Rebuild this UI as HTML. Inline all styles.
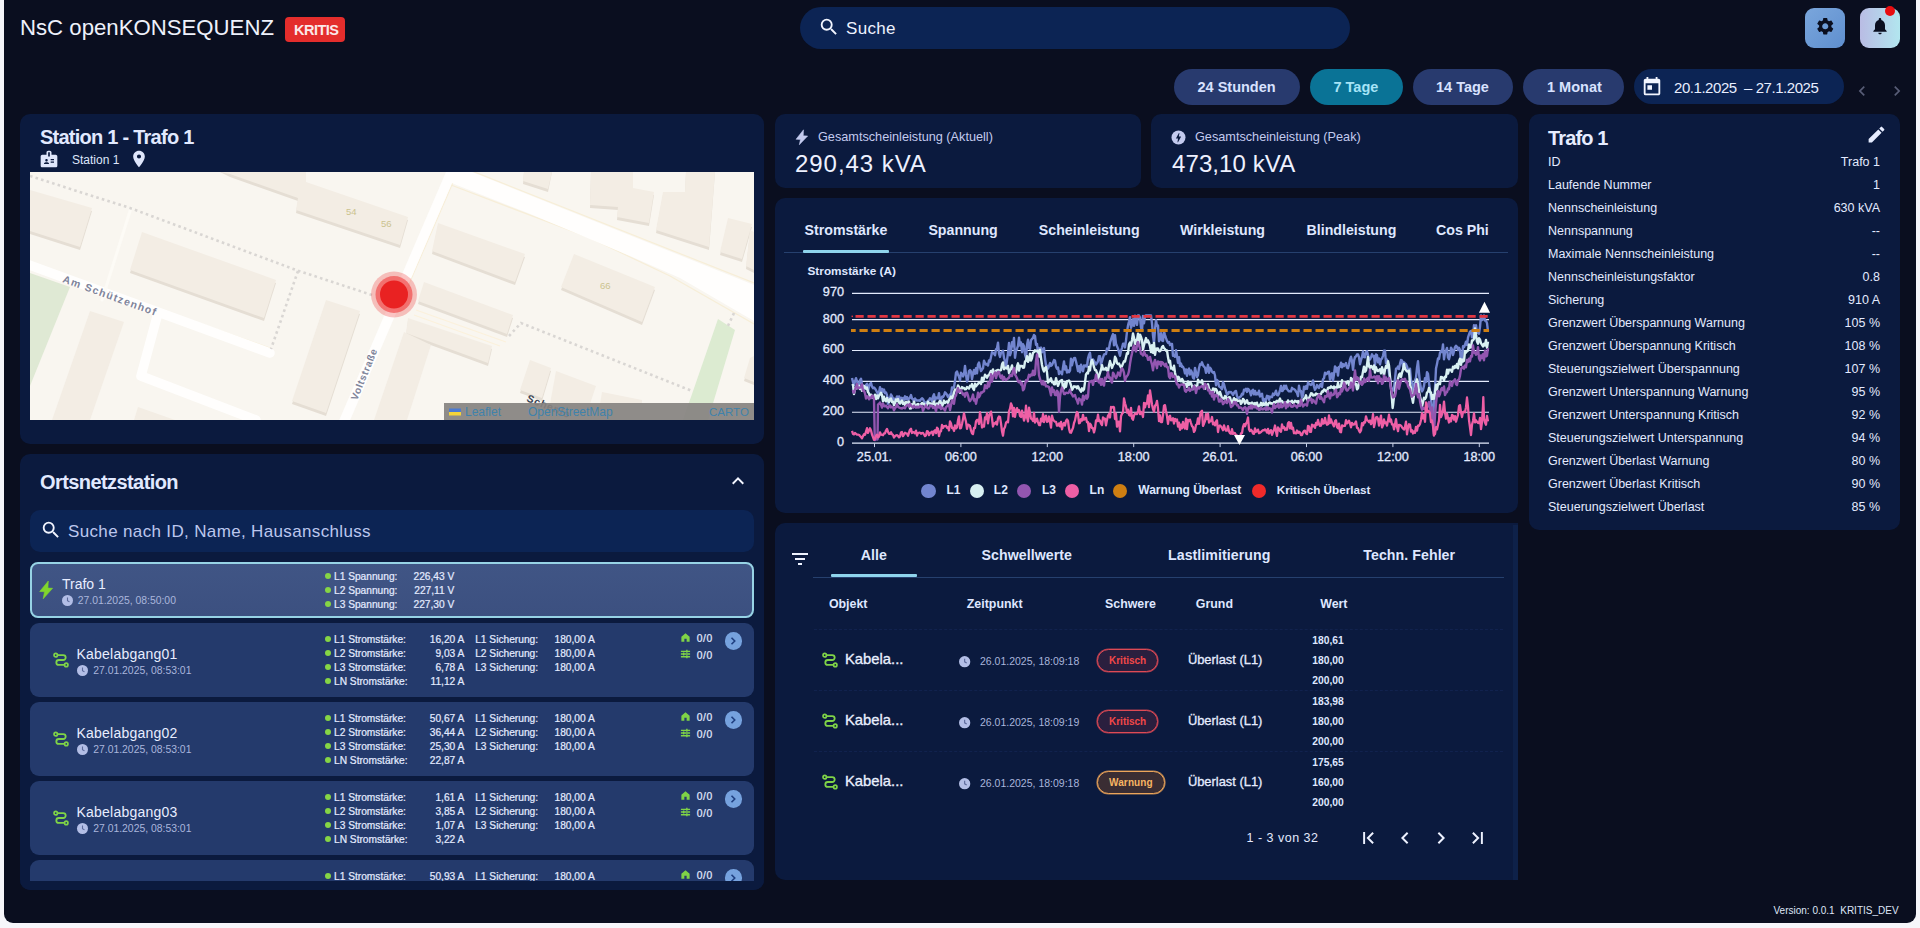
<!DOCTYPE html>
<html lang="de">
<head>
<meta charset="utf-8">
<title>NsC openKONSEQUENZ</title>
<style>
*{box-sizing:border-box;margin:0;padding:0}
html,body{width:1920px;height:928px;overflow:hidden;background:#f6f6fa;font-family:"Liberation Sans",sans-serif;color:#e3eaff}
#app{position:absolute;left:4px;top:0;width:1912px;height:923px;background:#0a0e1f;border-radius:0 0 9px 9px;overflow:hidden}
.abs,.t{position:absolute;white-space:pre;line-height:1}
.panel{position:absolute;background:#0b1a3e;border-radius:10px}
.b{font-weight:700}
svg{position:absolute;overflow:visible}
</style>
</head>
<body>
<div id="app">
<!-- HEADER -->
<div class="t" style="left:16px;top:16.5px;font-size:22.2px;color:#eef1fb">NsC openKONSEQUENZ</div>
<div class="abs" style="left:281px;top:17px;width:60px;height:25px;background:#e42d2c;border-radius:4px"></div>
<div class="t b" style="left:290px;top:22.5px;font-size:14.5px;letter-spacing:-0.5px;color:#fbe9ea">KRITIS</div>

<div class="abs" style="left:796px;top:7px;width:550px;height:42px;border-radius:21px;background:#0c2454"></div>
<svg style="left:814px;top:16px" width="22" height="22" viewBox="0 0 24 24"><path fill="#f2f5ff" d="M15.5 14h-.79l-.28-.27A6.471 6.471 0 0 0 16 9.500 6.500 6.500 0 1 0 9.500 16c1.610 0 3.090-.590 4.230-1.570l.27.280v.790l5 4.990L20.490 19l-4.990-5zm-6 0C7.010 14 5 11.990 5 9.500S7.010 5 9.500 5 14 7.010 14 9.500 11.990 14 9.500 14z"/></svg>
<div class="t" style="left:842px;top:19.5px;font-size:17px;letter-spacing:0.3px;color:#eef2ff">Suche</div>

<div class="abs" style="left:1801px;top:8px;width:40px;height:40px;border-radius:9px;background:linear-gradient(135deg,#7aa6dc,#5f8fcf)"></div>
<svg style="left:1810.5px;top:16.2px" width="20.5" height="20.5" viewBox="0 0 24 24"><path fill="#0a0e1f" d="M19.140 12.940c.040-.300.060-.610.060-.940 0-.320-.020-.640-.070-.940l2.030-1.580a.490.490 0 0 0 .120-.610l-1.920-3.320a.488.488 0 0 0-.590-.220l-2.390.960c-.500-.380-1.030-.700-1.620-.940l-.360-2.540a.484.484 0 0 0-.480-.410h-3.840c-.240 0-.430.170-.470.410l-.360 2.540c-.590.240-1.130.570-1.620.940l-2.390-.960c-.220-.080-.470 0-.590.220L2.740 8.870c-.120.210-.080.470.120.610l2.030 1.580c-.050.300-.090.630-.090.940s.020.640.070.940l-2.030 1.580a.490.490 0 0 0-.120.610l1.920 3.320c.120.220.370.290.590.220l2.390-.960c.500.380 1.030.700 1.620.940l.360 2.540c.050.240.240.410.480.410h3.840c.240 0 .440-.170.470-.410l.360-2.540c.590-.240 1.130-.560 1.620-.940l2.390.960c.220.080.470 0 .590-.220l1.920-3.320c.120-.220.070-.470-.120-.610l-2.010-1.580zM12 15.600c-1.980 0-3.600-1.620-3.600-3.600s1.620-3.600 3.600-3.600 3.600 1.620 3.600 3.600-1.620 3.600-3.600 3.600z"/></svg>
<div class="abs" style="left:1856px;top:8px;width:40px;height:40px;border-radius:9px;background:linear-gradient(90deg,#b9bce4,#b2e6ef)"></div>
<svg style="left:1866px;top:16.3px" width="20" height="20" viewBox="0 0 24 24"><path fill="#0a0e1f" d="M12 22c1.100 0 2-.900 2-2h-4c0 1.100.890 2 2 2zm6-6v-5c0-3.070-1.640-5.640-4.500-6.320V4c0-.830-.670-1.500-1.500-1.500s-1.500.670-1.500 1.500v.680C7.630 5.360 6 7.920 6 11v5l-2 2v1h16v-1l-2-2z"/></svg>
<div class="abs" style="left:1881px;top:6px;width:10px;height:10px;border-radius:5px;background:#e80d10"></div>

<!-- time range buttons -->
<div class="abs" style="left:1170px;top:69px;width:126px;height:36px;border-radius:18px;background:#283a6e"></div>
<div class="t b" style="left:1193.5px;top:79.5px;font-size:14.5px;color:#d8e2ff">24 Stunden</div>
<div class="abs" style="left:1306px;top:69px;width:93px;height:36px;border-radius:18px;background:#0a7396"></div>
<div class="t b" style="left:1329.5px;top:79.5px;font-size:14.5px;color:#a6e4f7">7 Tage</div>
<div class="abs" style="left:1409px;top:69px;width:100px;height:36px;border-radius:18px;background:#283a6e"></div>
<div class="t b" style="left:1432px;top:79.5px;font-size:14.5px;color:#d8e2ff">14 Tage</div>
<div class="abs" style="left:1519px;top:69px;width:101px;height:36px;border-radius:18px;background:#283a6e"></div>
<div class="t b" style="left:1543px;top:79.5px;font-size:14.5px;color:#d8e2ff">1 Monat</div>
<div class="abs" style="left:1630px;top:69px;width:210px;height:35px;border-radius:18px;background:#0c2454"></div>
<svg style="left:1637px;top:76px" width="22" height="22" viewBox="0 0 24 24"><path fill="#f2f5ff" d="M19 3h-1V1h-2v2H8V1H6v2H5c-1.110 0-1.990.900-1.990 2L3 19a2 2 0 0 0 2 2h14c1.100 0 2-.900 2-2V5c0-1.100-.900-2-2-2zm0 16H5V8h14v11zM7 10h5v5H7z"/></svg>
<div class="t" style="left:1670px;top:80px;font-size:15px;letter-spacing:-0.45px;color:#e8eeff">20.1.2025  – 27.1.2025</div>
<svg style="left:1848px;top:81px" width="20" height="20" viewBox="0 0 24 24"><path fill="#585d76" d="M15.410 7.410 14 6l-6 6 6 6 1.410-1.410L10.830 12z"/></svg>
<svg style="left:1883px;top:81px" width="20" height="20" viewBox="0 0 24 24"><path fill="#585d76" d="M10 6 8.590 7.410 13.170 12l-4.580 4.590L10 18l6-6z"/></svg>
<!-- STATION PANEL -->
<div class="panel" style="left:16px;top:114px;width:744px;height:330px"></div>
<div class="t b" style="left:36px;top:126.6px;font-size:20px;letter-spacing:-0.75px;color:#e1e9ff">Station 1 - Trafo 1</div>
<svg style="left:35px;top:149px" width="20" height="20" viewBox="0 0 24 24"><path fill="#dfe6fb" d="M20 7h-5V4c0-1.100-.900-2-2-2h-2c-1.100 0-2 .900-2 2v3H4c-1.100 0-2 .900-2 2v11c0 1.100.900 2 2 2h16c1.100 0 2-.900 2-2V9c0-1.100-.900-2-2-2zM9 12c.830 0 1.500.670 1.500 1.500S9.830 15 9 15s-1.500-.670-1.500-1.500S8.170 12 9 12zm3 6H6v-.750c0-1 2-1.500 3-1.500s3 .500 3 1.500V18zm1-9h-2V4h2v5zm5 7.500h-4V15h4v1.500zm0-3h-4V12h4v1.500z"/></svg>
<div class="t" style="left:68px;top:153.5px;font-size:12px;color:#dfe6fb">Station 1</div>
<svg style="left:125px;top:148.500px" width="20" height="20" viewBox="0 0 24 24"><path fill="#dfe6fb" d="M12 2C8.130 2 5 5.130 5 9c0 5.250 7 13 7 13s7-7.750 7-13c0-3.870-3.130-7-7-7zm0 9.500a2.500 2.500 0 0 1 0-5 2.500 2.500 0 0 1 0 5z"/></svg>
<!-- MAP -->
<div class="abs" style="left:26px;top:172px;width:724px;height:248px;background:#f8f5ef;overflow:hidden">
<svg width="724" height="248" viewBox="0 0 724 248" style="left:0;top:0">
<rect width="724" height="248" fill="#f9f6f0"/>
<!-- green -->
<polygon points="0,101 40,115 0,214" fill="#dfe9d4"/>
<polygon points="688,147 705,158 678,248 653,248" fill="#dcebd1"/>
<!-- block outlines (pedestrian) -->
<g fill="none" stroke="#f7eed8" stroke-width="1.200">
<polyline points="421,13 560,66 640,104 724,152"/><polyline points="442,-1 724,111"/>
<polyline points="0,92 240,176"/>
<polyline points="424,8 372,128"/>
</g>
<!-- roads -->
<g stroke="#fffefd" fill="none" stroke-linecap="round" stroke-linejoin="round">
<polygon points="437,-2 724,113 724,149 650,106 600,84 498,41 414,8 418,-2" fill="#fffefd" stroke="none"/>
<polyline points="-6,91 240,181" stroke-width="9.500"/>
<polyline points="128,141 111,204 226,248" stroke-width="9.500"/>
<line x1="424" y1="-6" x2="313" y2="252" stroke-width="10" stroke-linecap="butt"/>
<line x1="101" y1="36" x2="72" y2="128" stroke-width="3" stroke="#fdfbf6"/>
</g>
<!-- dotted footpaths -->
<g fill="none" stroke="#d9d6d3" stroke-width="2.600" stroke-dasharray="2.600 3.200">
<polyline points="0,4 100,36 266,98 342,123"/>
<polyline points="268,99 241,177"/>
<polyline points="479,164 491,151 662,219"/>
<polyline points="704,141 697,156"/>
</g>
<!-- buildings: shadow then top -->
<g fill="#e5ded4">
<polygon points="0,21 62,39 50,78 0,62"/>
<polygon points="190,0 276,0 276,13 378,48 370,76 266,41 268,29 200,5"/>
<polygon points="112,63 246,111 234,149 100,101"/>
<polygon points="296,131 330,142 296,244 262,232"/>
<polygon points="408,54 495,85 485,113 402,82"/>
<polygon points="394,113 483,146 477,165 388,132"/>
<polygon points="378,149 462,177 458,194 376,164"/>
<polygon points="544,85 625,118 612,153 531,118"/>
<polygon points="494,0 522,0 518,20 493,12"/>
<polygon points="561,0 603,0 603,19 624,23 619,54 587,48 588,38 560,36"/>
<polygon points="656,0 685,0 679,78 626,61 633,23 655,23"/>
<polygon points="698,49 722,55 712,90 690,83"/>
<polygon points="720,61 724,63 724,101 716,97"/>
<polygon points="500,191 521,199 512,229 490,221"/>
<polygon points="714,209 724,213 724,187 720,189"/>
</g>
<g fill="#f3ede4">
<polygon points="0,18 62,36 50,75 0,59"/>
<polygon points="190,0 276,0 276,10 378,45 370,73 266,38 268,26 200,2"/>
<polygon points="112,60 246,108 234,146 100,98"/>
<polygon points="60,139 94,150 60,248 22,248"/>
<polygon points="108,235 145,248 104,248"/>
<polygon points="296,128 330,139 296,241 262,229"/>
<polygon points="374,160 401,173 377,248 344,248"/>
<polygon points="408,51 495,82 485,110 402,79"/>
<polygon points="394,110 483,143 477,162 388,129"/>
<polygon points="378,146 462,174 458,191 376,161"/>
<polygon points="544,82 625,115 612,150 531,115"/>
<polygon points="494,0 522,0 518,17 493,9"/>
<polygon points="561,0 603,0 603,16 624,20 619,51 587,45 588,35 560,33"/>
<polygon points="656,0 685,0 679,75 626,58 633,20 655,20"/>
<polygon points="698,46 722,52 712,87 690,80"/>
<polygon points="720,58 724,60 724,98 716,94"/>
<polygon points="500,188 521,196 512,226 490,218"/>
<polygon points="526,199 566,214 560,232 520,232"/>
<polygon points="572,220 612,228 612,232 570,232"/>
<polygon points="720,186 724,184 724,210 714,206"/>
</g>
<!-- steps -->
<g stroke="#fbf1dc" stroke-width="1.200"><line x1="386" y1="138" x2="476" y2="170"/><line x1="384" y1="143" x2="470" y2="174"/></g>
<!-- labels -->
<g font-family="Liberation Sans" font-weight="700" fill="#80849a">
<text x="0" y="0" font-size="10.500" letter-spacing="1.200" transform="translate(32,110) rotate(20)">Am Schützenhof</text>
<text x="0" y="0" font-size="10" letter-spacing="0.700" transform="translate(327,229) rotate(-68)">Voltstraße</text>
<text x="0" y="0" font-size="10.500" letter-spacing="0.800" fill="#3b4454" transform="translate(496,229) rotate(22)">Schenlo</text>
</g>
<g font-family="Liberation Sans" font-size="9.500" fill="#cbc38f">
<text x="316" y="43">54</text><text x="351" y="55">56</text><text x="570" y="117">66</text>
</g>
<!-- marker -->
<circle cx="364" cy="122.500" r="23" fill="#ee3030" fill-opacity="0.280"/>
<circle cx="364" cy="122.500" r="18.500" fill="#ee3030" fill-opacity="0.550"/>
<circle cx="364" cy="122.500" r="14" fill="#e92222"/>
<!-- attribution -->
<rect x="414" y="231" width="310" height="17" fill="#858280" fill-opacity="0.920"/>
<rect x="419" y="236.500" width="12" height="3.500" fill="#4c7ad2"/><rect x="419" y="240" width="12" height="3.500" fill="#f4d43a"/>
<g font-family="Liberation Sans" font-size="12" fill="#3f82ab"><text x="435" y="243.500">Leaflet</text><text x="498" y="243.500">OpenStreetMap</text><text x="679" y="243.500" font-size="11.500">CARTO</text></g>
</svg>
</div>
<!-- ORTSNETZSTATION PANEL -->
<div class="panel" style="left:16px;top:454px;width:744px;height:436px;overflow:hidden">
<div class="t b" style="left:20.0px;top:18.4px;font-size:20px;color:#e1e9ff;letter-spacing:-0.58px">Ortsnetzstation</div>
<svg style="left:706px;top:15px" width="24" height="24" viewBox="0 0 24 24"><path fill="#f2f5ff" d="M7.410 15.410 12 10.830l4.590 4.580L18 14l-6-6-6 6z"/></svg>
<div class="abs" style="left:10px;top:56px;width:724px;height:42px;border-radius:10px;background:#0c2454"></div>
<svg style="left:20px;top:65px" width="22" height="22" viewBox="0 0 24 24"><path fill="#f2f5ff" d="M15.500 14h-.790l-.280-.270A6.471 6.471 0 0 0 16 9.500 6.500 6.500 0 1 0 9.500 16c1.610 0 3.090-.590 4.230-1.570l.270.280v.790l5 4.990L20.490 19l-4.990-5zm-6 0C7.010 14 5 11.990 5 9.500S7.010 5 9.500 5 14 7.010 14 9.500 11.990 14 9.500 14z"/></svg>
<div class="t" style="left:48.0px;top:68.6px;font-size:17px;color:#bcc7ee;letter-spacing:0.35px">Suche nach ID, Name, Hausanschluss</div>
<div class="abs" style="left:10px;top:108px;width:724px;height:56px;border-radius:8px;border:2px solid #97d3e5;background:linear-gradient(180deg,#405585,#3c5080)"></div>
<svg style="left:0;top:0" width="10" height="10" viewBox="0 0 10 10"><polygon transform="translate(-20,-454)" points="48.3,581 39.7,591.5 44.5,591.7 43.2,598.8 52.6,588.3 47.9,588.1" fill="#80d62c" stroke="#80d62c" stroke-width="0.6" stroke-linejoin="round"/></svg>
<div class="t" style="left:42.0px;top:122.7px;font-size:14px;color:#e8edff;">Trafo 1</div>
<svg style="left:41.5px;top:140.7px" width="11" height="11" viewBox="0 0 11 11"><circle cx="5.500" cy="5.500" r="5.500" fill="#b3bee6"/><path d="M5.500 2.600V5.700L7.500 6.900" fill="none" stroke="#5c6a9a" stroke-width="1.100"/></svg>
<div class="t" style="left:57.7px;top:142.3px;font-size:10.4px;color:#aab6dc;">27.01.2025, 08:50:00</div>
<div class="abs" style="left:304.8px;top:118.8px;width:6.400px;height:6.400px;border-radius:50%;background:#86d545"></div>
<div class="t" style="left:314.0px;top:117.8px;font-size:10.2px;color:#e3eaff;-webkit-text-stroke:0.22px #e3eaff;">L1 Spannung:</div>
<div class="t" style="right:309.7px;top:117.8px;font-size:10.2px;color:#e3eaff;-webkit-text-stroke:0.22px #e3eaff;">226,43 V</div>
<div class="abs" style="left:304.8px;top:132.8px;width:6.400px;height:6.400px;border-radius:50%;background:#86d545"></div>
<div class="t" style="left:314.0px;top:131.8px;font-size:10.2px;color:#e3eaff;-webkit-text-stroke:0.22px #e3eaff;">L2 Spannung:</div>
<div class="t" style="right:309.7px;top:131.8px;font-size:10.2px;color:#e3eaff;-webkit-text-stroke:0.22px #e3eaff;">227,11 V</div>
<div class="abs" style="left:304.8px;top:146.8px;width:6.400px;height:6.400px;border-radius:50%;background:#86d545"></div>
<div class="t" style="left:314.0px;top:145.8px;font-size:10.2px;color:#e3eaff;-webkit-text-stroke:0.22px #e3eaff;">L3 Spannung:</div>
<div class="t" style="right:309.7px;top:145.8px;font-size:10.2px;color:#e3eaff;-webkit-text-stroke:0.22px #e3eaff;">227,30 V</div>
<div class="abs" style="left:10px;top:169.2px;width:724px;height:73.600px;border-radius:9px;background:#243a6c"></div>
<svg style="left:32px;top:197.0px" width="18" height="18" viewBox="0 0 24 24"><g fill="none" stroke="#7fd447" stroke-width="2.400" stroke-linecap="round"><path d="M7.500 5.500H15a3.250 3.250 0 0 1 0 6.500H9a3.250 3.250 0 0 0 0 6.500h7.500"/></g><circle cx="5" cy="5.500" r="2.300" fill="none" stroke="#7fd447" stroke-width="2.200"/><circle cx="19" cy="18.500" r="2.300" fill="none" stroke="#7fd447" stroke-width="2.200"/></svg>
<div class="t" style="left:56.5px;top:192.5px;font-size:14px;color:#e8edff;letter-spacing:0.22px">Kabelabgang01</div>
<svg style="left:56.5px;top:211.0px" width="11" height="11" viewBox="0 0 11 11"><circle cx="5.500" cy="5.500" r="5.500" fill="#b3bee6"/><path d="M5.500 2.600V5.700L7.500 6.900" fill="none" stroke="#5c6a9a" stroke-width="1.100"/></svg>
<div class="t" style="left:73.2px;top:211.8px;font-size:10.4px;color:#aab6dc;">27.01.2025, 08:53:01</div>
<div class="abs" style="left:304.8px;top:182.0px;width:6.400px;height:6.400px;border-radius:50%;background:#86d545"></div>
<div class="t" style="left:314.0px;top:181.0px;font-size:10.2px;color:#e3eaff;-webkit-text-stroke:0.22px #e3eaff;">L1 Stromstärke:</div>
<div class="t" style="right:299.7px;top:181.0px;font-size:10.2px;color:#e3eaff;-webkit-text-stroke:0.22px #e3eaff;">16,20 A</div>
<div class="t" style="left:455.2px;top:181.0px;font-size:10.2px;color:#e3eaff;-webkit-text-stroke:0.22px #e3eaff;">L1 Sicherung:</div>
<div class="t" style="right:169.3px;top:181.0px;font-size:10.2px;color:#e3eaff;-webkit-text-stroke:0.22px #e3eaff;">180,00 A</div>
<div class="abs" style="left:304.8px;top:196.0px;width:6.400px;height:6.400px;border-radius:50%;background:#86d545"></div>
<div class="t" style="left:314.0px;top:195.0px;font-size:10.2px;color:#e3eaff;-webkit-text-stroke:0.22px #e3eaff;">L2 Stromstärke:</div>
<div class="t" style="right:299.7px;top:195.0px;font-size:10.2px;color:#e3eaff;-webkit-text-stroke:0.22px #e3eaff;">9,03 A</div>
<div class="t" style="left:455.2px;top:195.0px;font-size:10.2px;color:#e3eaff;-webkit-text-stroke:0.22px #e3eaff;">L2 Sicherung:</div>
<div class="t" style="right:169.3px;top:195.0px;font-size:10.2px;color:#e3eaff;-webkit-text-stroke:0.22px #e3eaff;">180,00 A</div>
<div class="abs" style="left:304.8px;top:210.0px;width:6.400px;height:6.400px;border-radius:50%;background:#86d545"></div>
<div class="t" style="left:314.0px;top:209.0px;font-size:10.2px;color:#e3eaff;-webkit-text-stroke:0.22px #e3eaff;">L3 Stromstärke:</div>
<div class="t" style="right:299.7px;top:209.0px;font-size:10.2px;color:#e3eaff;-webkit-text-stroke:0.22px #e3eaff;">6,78 A</div>
<div class="t" style="left:455.2px;top:209.0px;font-size:10.2px;color:#e3eaff;-webkit-text-stroke:0.22px #e3eaff;">L3 Sicherung:</div>
<div class="t" style="right:169.3px;top:209.0px;font-size:10.2px;color:#e3eaff;-webkit-text-stroke:0.22px #e3eaff;">180,00 A</div>
<div class="abs" style="left:304.8px;top:224.0px;width:6.400px;height:6.400px;border-radius:50%;background:#86d545"></div>
<div class="t" style="left:314.0px;top:223.0px;font-size:10.2px;color:#e3eaff;-webkit-text-stroke:0.22px #e3eaff;">LN Stromstärke:</div>
<div class="t" style="right:299.7px;top:223.0px;font-size:10.2px;color:#e3eaff;-webkit-text-stroke:0.22px #e3eaff;">11,12 A</div>
<svg style="left:660px;top:177.8px" width="11" height="11" viewBox="0 0 24 24"><path fill="#7fd447" d="M12 2.500 3 10.500V21.500H9.500V14.500H14.500V21.500H21V10.500z"/></svg>
<div class="t" style="left:676.8px;top:179.5px;font-size:10.3px;color:#e3eaff;letter-spacing:0.5px;-webkit-text-stroke:0.22px #e3eaff;">0/0</div>
<svg style="left:660px;top:194.6px" width="11" height="10" preserveAspectRatio="none" viewBox="0 0 24 24"><g stroke="#7fd447" stroke-width="3.200" fill="none"><path d="M2 5.500H22M2 12H22M2 18.500H22"/><path d="M15 2V9M8 8.500V15.500M15 15V22" stroke-width="3"/></g></svg>
<div class="t" style="left:676.8px;top:196.5px;font-size:10.3px;color:#e3eaff;letter-spacing:0.5px;-webkit-text-stroke:0.22px #e3eaff;">0/0</div>
<div class="abs" style="left:704.5px;top:178.2px;width:17.600px;height:17.600px;border-radius:50%;background:#76a2de"></div>
<svg style="left:707.3px;top:181.0px" width="12" height="12" viewBox="0 0 24 24"><path fill="none" stroke="#1f3f80" stroke-width="3.200" d="M9 5.500 15.500 12 9 18.500"/></svg>
<div class="abs" style="left:10px;top:248.2px;width:724px;height:73.600px;border-radius:9px;background:#243a6c"></div>
<svg style="left:32px;top:276.0px" width="18" height="18" viewBox="0 0 24 24"><g fill="none" stroke="#7fd447" stroke-width="2.400" stroke-linecap="round"><path d="M7.500 5.500H15a3.250 3.250 0 0 1 0 6.500H9a3.250 3.250 0 0 0 0 6.500h7.500"/></g><circle cx="5" cy="5.500" r="2.300" fill="none" stroke="#7fd447" stroke-width="2.200"/><circle cx="19" cy="18.500" r="2.300" fill="none" stroke="#7fd447" stroke-width="2.200"/></svg>
<div class="t" style="left:56.5px;top:271.5px;font-size:14px;color:#e8edff;letter-spacing:0.22px">Kabelabgang02</div>
<svg style="left:56.5px;top:290.0px" width="11" height="11" viewBox="0 0 11 11"><circle cx="5.500" cy="5.500" r="5.500" fill="#b3bee6"/><path d="M5.500 2.600V5.700L7.500 6.900" fill="none" stroke="#5c6a9a" stroke-width="1.100"/></svg>
<div class="t" style="left:73.2px;top:290.8px;font-size:10.4px;color:#aab6dc;">27.01.2025, 08:53:01</div>
<div class="abs" style="left:304.8px;top:261.0px;width:6.400px;height:6.400px;border-radius:50%;background:#86d545"></div>
<div class="t" style="left:314.0px;top:260.0px;font-size:10.2px;color:#e3eaff;-webkit-text-stroke:0.22px #e3eaff;">L1 Stromstärke:</div>
<div class="t" style="right:299.7px;top:260.0px;font-size:10.2px;color:#e3eaff;-webkit-text-stroke:0.22px #e3eaff;">50,67 A</div>
<div class="t" style="left:455.2px;top:260.0px;font-size:10.2px;color:#e3eaff;-webkit-text-stroke:0.22px #e3eaff;">L1 Sicherung:</div>
<div class="t" style="right:169.3px;top:260.0px;font-size:10.2px;color:#e3eaff;-webkit-text-stroke:0.22px #e3eaff;">180,00 A</div>
<div class="abs" style="left:304.8px;top:275.0px;width:6.400px;height:6.400px;border-radius:50%;background:#86d545"></div>
<div class="t" style="left:314.0px;top:274.0px;font-size:10.2px;color:#e3eaff;-webkit-text-stroke:0.22px #e3eaff;">L2 Stromstärke:</div>
<div class="t" style="right:299.7px;top:274.0px;font-size:10.2px;color:#e3eaff;-webkit-text-stroke:0.22px #e3eaff;">36,44 A</div>
<div class="t" style="left:455.2px;top:274.0px;font-size:10.2px;color:#e3eaff;-webkit-text-stroke:0.22px #e3eaff;">L2 Sicherung:</div>
<div class="t" style="right:169.3px;top:274.0px;font-size:10.2px;color:#e3eaff;-webkit-text-stroke:0.22px #e3eaff;">180,00 A</div>
<div class="abs" style="left:304.8px;top:289.0px;width:6.400px;height:6.400px;border-radius:50%;background:#86d545"></div>
<div class="t" style="left:314.0px;top:288.0px;font-size:10.2px;color:#e3eaff;-webkit-text-stroke:0.22px #e3eaff;">L3 Stromstärke:</div>
<div class="t" style="right:299.7px;top:288.0px;font-size:10.2px;color:#e3eaff;-webkit-text-stroke:0.22px #e3eaff;">25,30 A</div>
<div class="t" style="left:455.2px;top:288.0px;font-size:10.2px;color:#e3eaff;-webkit-text-stroke:0.22px #e3eaff;">L3 Sicherung:</div>
<div class="t" style="right:169.3px;top:288.0px;font-size:10.2px;color:#e3eaff;-webkit-text-stroke:0.22px #e3eaff;">180,00 A</div>
<div class="abs" style="left:304.8px;top:303.0px;width:6.400px;height:6.400px;border-radius:50%;background:#86d545"></div>
<div class="t" style="left:314.0px;top:302.0px;font-size:10.2px;color:#e3eaff;-webkit-text-stroke:0.22px #e3eaff;">LN Stromstärke:</div>
<div class="t" style="right:299.7px;top:302.0px;font-size:10.2px;color:#e3eaff;-webkit-text-stroke:0.22px #e3eaff;">22,87 A</div>
<svg style="left:660px;top:256.8px" width="11" height="11" viewBox="0 0 24 24"><path fill="#7fd447" d="M12 2.500 3 10.500V21.500H9.500V14.500H14.500V21.500H21V10.500z"/></svg>
<div class="t" style="left:676.8px;top:258.5px;font-size:10.3px;color:#e3eaff;letter-spacing:0.5px;-webkit-text-stroke:0.22px #e3eaff;">0/0</div>
<svg style="left:660px;top:273.6px" width="11" height="10" preserveAspectRatio="none" viewBox="0 0 24 24"><g stroke="#7fd447" stroke-width="3.200" fill="none"><path d="M2 5.500H22M2 12H22M2 18.500H22"/><path d="M15 2V9M8 8.500V15.500M15 15V22" stroke-width="3"/></g></svg>
<div class="t" style="left:676.8px;top:275.5px;font-size:10.3px;color:#e3eaff;letter-spacing:0.5px;-webkit-text-stroke:0.22px #e3eaff;">0/0</div>
<div class="abs" style="left:704.5px;top:257.2px;width:17.600px;height:17.600px;border-radius:50%;background:#76a2de"></div>
<svg style="left:707.3px;top:260.0px" width="12" height="12" viewBox="0 0 24 24"><path fill="none" stroke="#1f3f80" stroke-width="3.200" d="M9 5.500 15.500 12 9 18.500"/></svg>
<div class="abs" style="left:10px;top:327.2px;width:724px;height:73.600px;border-radius:9px;background:#243a6c"></div>
<svg style="left:32px;top:355.0px" width="18" height="18" viewBox="0 0 24 24"><g fill="none" stroke="#7fd447" stroke-width="2.400" stroke-linecap="round"><path d="M7.500 5.500H15a3.250 3.250 0 0 1 0 6.500H9a3.250 3.250 0 0 0 0 6.500h7.500"/></g><circle cx="5" cy="5.500" r="2.300" fill="none" stroke="#7fd447" stroke-width="2.200"/><circle cx="19" cy="18.500" r="2.300" fill="none" stroke="#7fd447" stroke-width="2.200"/></svg>
<div class="t" style="left:56.5px;top:350.5px;font-size:14px;color:#e8edff;letter-spacing:0.22px">Kabelabgang03</div>
<svg style="left:56.5px;top:369.0px" width="11" height="11" viewBox="0 0 11 11"><circle cx="5.500" cy="5.500" r="5.500" fill="#b3bee6"/><path d="M5.500 2.600V5.700L7.500 6.900" fill="none" stroke="#5c6a9a" stroke-width="1.100"/></svg>
<div class="t" style="left:73.2px;top:369.8px;font-size:10.4px;color:#aab6dc;">27.01.2025, 08:53:01</div>
<div class="abs" style="left:304.8px;top:340.0px;width:6.400px;height:6.400px;border-radius:50%;background:#86d545"></div>
<div class="t" style="left:314.0px;top:339.0px;font-size:10.2px;color:#e3eaff;-webkit-text-stroke:0.22px #e3eaff;">L1 Stromstärke:</div>
<div class="t" style="right:299.7px;top:339.0px;font-size:10.2px;color:#e3eaff;-webkit-text-stroke:0.22px #e3eaff;">1,61 A</div>
<div class="t" style="left:455.2px;top:339.0px;font-size:10.2px;color:#e3eaff;-webkit-text-stroke:0.22px #e3eaff;">L1 Sicherung:</div>
<div class="t" style="right:169.3px;top:339.0px;font-size:10.2px;color:#e3eaff;-webkit-text-stroke:0.22px #e3eaff;">180,00 A</div>
<div class="abs" style="left:304.8px;top:354.0px;width:6.400px;height:6.400px;border-radius:50%;background:#86d545"></div>
<div class="t" style="left:314.0px;top:353.0px;font-size:10.2px;color:#e3eaff;-webkit-text-stroke:0.22px #e3eaff;">L2 Stromstärke:</div>
<div class="t" style="right:299.7px;top:353.0px;font-size:10.2px;color:#e3eaff;-webkit-text-stroke:0.22px #e3eaff;">3,85 A</div>
<div class="t" style="left:455.2px;top:353.0px;font-size:10.2px;color:#e3eaff;-webkit-text-stroke:0.22px #e3eaff;">L2 Sicherung:</div>
<div class="t" style="right:169.3px;top:353.0px;font-size:10.2px;color:#e3eaff;-webkit-text-stroke:0.22px #e3eaff;">180,00 A</div>
<div class="abs" style="left:304.8px;top:368.0px;width:6.400px;height:6.400px;border-radius:50%;background:#86d545"></div>
<div class="t" style="left:314.0px;top:367.0px;font-size:10.2px;color:#e3eaff;-webkit-text-stroke:0.22px #e3eaff;">L3 Stromstärke:</div>
<div class="t" style="right:299.7px;top:367.0px;font-size:10.2px;color:#e3eaff;-webkit-text-stroke:0.22px #e3eaff;">1,07 A</div>
<div class="t" style="left:455.2px;top:367.0px;font-size:10.2px;color:#e3eaff;-webkit-text-stroke:0.22px #e3eaff;">L3 Sicherung:</div>
<div class="t" style="right:169.3px;top:367.0px;font-size:10.2px;color:#e3eaff;-webkit-text-stroke:0.22px #e3eaff;">180,00 A</div>
<div class="abs" style="left:304.8px;top:382.0px;width:6.400px;height:6.400px;border-radius:50%;background:#86d545"></div>
<div class="t" style="left:314.0px;top:381.0px;font-size:10.2px;color:#e3eaff;-webkit-text-stroke:0.22px #e3eaff;">LN Stromstärke:</div>
<div class="t" style="right:299.7px;top:381.0px;font-size:10.2px;color:#e3eaff;-webkit-text-stroke:0.22px #e3eaff;">3,22 A</div>
<svg style="left:660px;top:335.8px" width="11" height="11" viewBox="0 0 24 24"><path fill="#7fd447" d="M12 2.500 3 10.500V21.500H9.500V14.500H14.500V21.500H21V10.500z"/></svg>
<div class="t" style="left:676.8px;top:337.5px;font-size:10.3px;color:#e3eaff;letter-spacing:0.5px;-webkit-text-stroke:0.22px #e3eaff;">0/0</div>
<svg style="left:660px;top:352.6px" width="11" height="10" preserveAspectRatio="none" viewBox="0 0 24 24"><g stroke="#7fd447" stroke-width="3.200" fill="none"><path d="M2 5.500H22M2 12H22M2 18.500H22"/><path d="M15 2V9M8 8.500V15.500M15 15V22" stroke-width="3"/></g></svg>
<div class="t" style="left:676.8px;top:354.5px;font-size:10.3px;color:#e3eaff;letter-spacing:0.5px;-webkit-text-stroke:0.22px #e3eaff;">0/0</div>
<div class="abs" style="left:704.5px;top:336.2px;width:17.600px;height:17.600px;border-radius:50%;background:#76a2de"></div>
<svg style="left:707.3px;top:339.0px" width="12" height="12" viewBox="0 0 24 24"><path fill="none" stroke="#1f3f80" stroke-width="3.200" d="M9 5.500 15.500 12 9 18.500"/></svg>
<div class="abs" style="left:10px;top:406.2px;width:724px;height:73.600px;border-radius:9px;background:#243a6c"></div>
<svg style="left:32px;top:434.0px" width="18" height="18" viewBox="0 0 24 24"><g fill="none" stroke="#7fd447" stroke-width="2.400" stroke-linecap="round"><path d="M7.500 5.500H15a3.250 3.250 0 0 1 0 6.500H9a3.250 3.250 0 0 0 0 6.500h7.500"/></g><circle cx="5" cy="5.500" r="2.300" fill="none" stroke="#7fd447" stroke-width="2.200"/><circle cx="19" cy="18.500" r="2.300" fill="none" stroke="#7fd447" stroke-width="2.200"/></svg>
<div class="t" style="left:56.5px;top:429.5px;font-size:14px;color:#e8edff;letter-spacing:0.22px">Kabelabgang04</div>
<svg style="left:56.5px;top:448.0px" width="11" height="11" viewBox="0 0 11 11"><circle cx="5.500" cy="5.500" r="5.500" fill="#b3bee6"/><path d="M5.500 2.600V5.700L7.500 6.900" fill="none" stroke="#5c6a9a" stroke-width="1.100"/></svg>
<div class="t" style="left:73.2px;top:448.8px;font-size:10.4px;color:#aab6dc;">27.01.2025, 08:53:01</div>
<div class="abs" style="left:304.8px;top:419.0px;width:6.400px;height:6.400px;border-radius:50%;background:#86d545"></div>
<div class="t" style="left:314.0px;top:418.0px;font-size:10.2px;color:#e3eaff;-webkit-text-stroke:0.22px #e3eaff;">L1 Stromstärke:</div>
<div class="t" style="right:299.7px;top:418.0px;font-size:10.2px;color:#e3eaff;-webkit-text-stroke:0.22px #e3eaff;">50,93 A</div>
<div class="t" style="left:455.2px;top:418.0px;font-size:10.2px;color:#e3eaff;-webkit-text-stroke:0.22px #e3eaff;">L1 Sicherung:</div>
<div class="t" style="right:169.3px;top:418.0px;font-size:10.2px;color:#e3eaff;-webkit-text-stroke:0.22px #e3eaff;">180,00 A</div>
<div class="abs" style="left:304.8px;top:433.0px;width:6.400px;height:6.400px;border-radius:50%;background:#86d545"></div>
<div class="t" style="left:314.0px;top:432.0px;font-size:10.2px;color:#e3eaff;-webkit-text-stroke:0.22px #e3eaff;">L2 Stromstärke:</div>
<div class="t" style="right:299.7px;top:432.0px;font-size:10.2px;color:#e3eaff;-webkit-text-stroke:0.22px #e3eaff;">41,02 A</div>
<div class="t" style="left:455.2px;top:432.0px;font-size:10.2px;color:#e3eaff;-webkit-text-stroke:0.22px #e3eaff;">L2 Sicherung:</div>
<div class="t" style="right:169.3px;top:432.0px;font-size:10.2px;color:#e3eaff;-webkit-text-stroke:0.22px #e3eaff;">180,00 A</div>
<div class="abs" style="left:304.8px;top:447.0px;width:6.400px;height:6.400px;border-radius:50%;background:#86d545"></div>
<div class="t" style="left:314.0px;top:446.0px;font-size:10.2px;color:#e3eaff;-webkit-text-stroke:0.22px #e3eaff;">L3 Stromstärke:</div>
<div class="t" style="right:299.7px;top:446.0px;font-size:10.2px;color:#e3eaff;-webkit-text-stroke:0.22px #e3eaff;">33,10 A</div>
<div class="t" style="left:455.2px;top:446.0px;font-size:10.2px;color:#e3eaff;-webkit-text-stroke:0.22px #e3eaff;">L3 Sicherung:</div>
<div class="t" style="right:169.3px;top:446.0px;font-size:10.2px;color:#e3eaff;-webkit-text-stroke:0.22px #e3eaff;">180,00 A</div>
<div class="abs" style="left:304.8px;top:461.0px;width:6.400px;height:6.400px;border-radius:50%;background:#86d545"></div>
<div class="t" style="left:314.0px;top:460.0px;font-size:10.2px;color:#e3eaff;-webkit-text-stroke:0.22px #e3eaff;">LN Stromstärke:</div>
<div class="t" style="right:299.7px;top:460.0px;font-size:10.2px;color:#e3eaff;-webkit-text-stroke:0.22px #e3eaff;">20,11 A</div>
<svg style="left:660px;top:414.8px" width="11" height="11" viewBox="0 0 24 24"><path fill="#7fd447" d="M12 2.500 3 10.500V21.500H9.500V14.500H14.500V21.500H21V10.500z"/></svg>
<div class="t" style="left:676.8px;top:416.5px;font-size:10.3px;color:#e3eaff;letter-spacing:0.5px;-webkit-text-stroke:0.22px #e3eaff;">0/0</div>
<svg style="left:660px;top:431.6px" width="11" height="10" preserveAspectRatio="none" viewBox="0 0 24 24"><g stroke="#7fd447" stroke-width="3.200" fill="none"><path d="M2 5.500H22M2 12H22M2 18.500H22"/><path d="M15 2V9M8 8.500V15.500M15 15V22" stroke-width="3"/></g></svg>
<div class="t" style="left:676.8px;top:433.5px;font-size:10.3px;color:#e3eaff;letter-spacing:0.5px;-webkit-text-stroke:0.22px #e3eaff;">0/0</div>
<div class="abs" style="left:704.5px;top:415.2px;width:17.600px;height:17.600px;border-radius:50%;background:#76a2de"></div>
<svg style="left:707.3px;top:418.0px" width="12" height="12" viewBox="0 0 24 24"><path fill="none" stroke="#1f3f80" stroke-width="3.200" d="M9 5.500 15.500 12 9 18.500"/></svg>
<div class="abs" style="left:0;top:426.500px;width:744px;height:12px;background:#0b1a3e"></div>
</div>
<!-- KPI CARDS -->
<div class="panel" style="left:770.500px;top:114px;width:366.500px;height:73.500px"></div>
<div class="panel" style="left:1147px;top:114px;width:367px;height:73.500px"></div>
<svg style="left:0;top:0" width="10" height="10" viewBox="0 0 10 10"><polygon transform="translate(-4,0)" points="803.5,129.800 796,139.300 800.400,139.500 799.300,144.800 807.700,136 803.300,135.800" fill="#c3caee" stroke="#c3caee" stroke-width="0.500" stroke-linejoin="round"/></svg>
<div class="t" style="left:814.0px;top:130.8px;font-size:12.7px;color:#c3cbee;">Gesamtscheinleistung (Aktuell)</div>
<div class="t" style="left:791.0px;top:151.5px;font-size:24px;color:#eef1ff;letter-spacing:0.95px">290,43 kVA</div>
<svg style="left:1166.500px;top:129.500px" width="15" height="15" viewBox="0 0 15 15"><circle cx="7.500" cy="7.500" r="7" fill="#c3caee"/><path fill="#0b1a3e" d="M7 12.200h-.500l.500-3.600H5.200c-.450 0-.170-.380-.160-.400L7.900 3h.500l-.500 3.600h1.800c.200 0 .320.100.200.340z"/></svg>
<div class="t" style="left:1191.0px;top:130.8px;font-size:12.7px;color:#c3cbee;">Gesamtscheinleistung (Peak)</div>
<div class="t" style="left:1168.0px;top:151.5px;font-size:24px;color:#eef1ff;letter-spacing:0.1px">473,10 kVA</div>
<!-- CHART PANEL -->
<div class="panel" style="left:770.500px;top:198px;width:743.500px;height:315px"></div>
<div class="t b" style="left:800.5px;top:223.3px;font-size:14.2px;color:#dfe7ff;">Stromstärke</div>
<div class="t b" style="left:924.4px;top:223.3px;font-size:14.2px;color:#dfe7ff;">Spannung</div>
<div class="t b" style="left:1034.8px;top:223.3px;font-size:14.2px;color:#dfe7ff;">Scheinleistung</div>
<div class="t b" style="left:1176.0px;top:223.3px;font-size:14.2px;color:#dfe7ff;">Wirkleistung</div>
<div class="t b" style="left:1302.5px;top:223.3px;font-size:14.2px;color:#dfe7ff;">Blindleistung</div>
<div class="t b" style="left:1432.0px;top:223.3px;font-size:14.2px;color:#dfe7ff;">Cos Phi</div>
<div class="abs" style="left:780px;top:252px;width:724px;height:1px;background:#26406e"></div>
<div class="abs" style="left:799px;top:249.500px;width:86px;height:3px;background:#8fd4ec;border-radius:1px"></div>
<div class="t b" style="left:803.5px;top:266.1px;font-size:11.8px;color:#dfe7ff;">Stromstärke (A)</div>
<svg style="left:-4px;top:0" width="1920" height="928" viewBox="0 0 1920 928">
<line x1="852" x2="1489" y1="293.4" y2="293.4" stroke="#e4ebfd" stroke-width="1.1"/>
<line x1="852" x2="1489" y1="319.6" y2="319.6" stroke="#e4ebfd" stroke-width="1.1"/>
<line x1="852" x2="1489" y1="350.5" y2="350.5" stroke="#e4ebfd" stroke-width="1.1"/>
<line x1="852" x2="1489" y1="381.4" y2="381.4" stroke="#e4ebfd" stroke-width="1.1"/>
<line x1="852" x2="1489" y1="412.2" y2="412.2" stroke="#e4ebfd" stroke-width="1.1"/>
<line x1="852" x2="1489" y1="443.1" y2="443.1" stroke="#e4ebfd" stroke-width="1.1"/>
<line x1="874.5" x2="874.5" y1="443.1" y2="447.1" stroke="#c5cfe8" stroke-width="1"/>
<line x1="960.9" x2="960.9" y1="443.1" y2="447.1" stroke="#c5cfe8" stroke-width="1"/>
<line x1="1047.3" x2="1047.3" y1="443.1" y2="447.1" stroke="#c5cfe8" stroke-width="1"/>
<line x1="1133.7" x2="1133.7" y1="443.1" y2="447.1" stroke="#c5cfe8" stroke-width="1"/>
<line x1="1220.1" x2="1220.1" y1="443.1" y2="447.1" stroke="#c5cfe8" stroke-width="1"/>
<line x1="1306.5" x2="1306.5" y1="443.1" y2="447.1" stroke="#c5cfe8" stroke-width="1"/>
<line x1="1392.9" x2="1392.9" y1="443.1" y2="447.1" stroke="#c5cfe8" stroke-width="1"/>
<line x1="1479.3" x2="1479.3" y1="443.1" y2="447.1" stroke="#c5cfe8" stroke-width="1"/>
<path d="M852.0 378.0 L853.0 382.1 L854.0 385.1 L855.0 381.4 L856.0 378.2 L857.0 381.3 L858.0 383.9 L859.0 386.5 L860.0 380.3 L861.0 378.7 L862.0 384.4 L863.0 385.3 L864.0 388.8 L865.0 388.1 L866.0 384.9 L867.0 383.7 L868.0 392.1 L869.0 386.4 L870.0 384.0 L871.0 382.9 L872.0 386.7 L873.0 388.2 L874.0 387.6 L875.0 388.6 L876.0 390.2 L877.0 392.1 L878.0 394.0 L879.0 392.5 L880.0 387.1 L881.0 392.8 L882.0 389.0 L883.0 391.7 L884.0 389.5 L885.0 393.1 L886.0 392.4 L887.0 395.1 L888.0 403.8 L889.0 398.0 L890.0 399.1 L891.0 394.5 L892.0 396.2 L893.0 399.3 L894.0 398.6 L895.0 399.9 L896.0 399.3 L897.0 396.4 L898.0 399.2 L899.0 396.5 L900.0 402.1 L901.0 397.7 L902.0 399.3 L903.0 397.9 L904.0 399.8 L905.0 396.3 L906.0 399.2 L907.0 397.0 L908.0 399.8 L909.0 398.7 L910.0 397.4 L911.0 395.1 L912.0 398.6 L913.0 399.0 L914.0 402.2 L915.0 398.5 L916.0 400.0 L917.0 400.6 L918.0 400.4 L919.0 400.5 L920.0 400.7 L921.0 399.3 L922.0 398.2 L923.0 399.1 L924.0 401.2 L925.0 403.4 L926.0 402.4 L927.0 402.0 L928.0 400.8 L929.0 400.0 L930.0 398.2 L931.0 398.8 L932.0 401.2 L933.0 396.5 L934.0 394.3 L935.0 400.3 L936.0 397.4 L937.0 398.4 L938.0 398.3 L939.0 393.1 L940.0 400.7 L941.0 400.8 L942.0 396.7 L943.0 397.0 L944.0 395.4 L945.0 392.3 L946.0 393.4 L947.0 394.8 L948.0 396.9 L949.0 396.3 L950.0 394.4 L951.0 394.9 L952.0 387.4 L953.0 388.0 L954.0 387.3 L955.0 380.9 L956.0 372.7 L957.0 371.4 L958.0 374.8 L959.0 376.7 L960.0 380.4 L961.0 372.7 L962.0 374.0 L963.0 376.4 L964.0 374.1 L965.0 366.0 L966.0 374.5 L967.0 381.6 L968.0 378.8 L969.0 371.0 L970.0 370.0 L971.0 371.4 L972.0 379.1 L973.0 373.8 L974.0 370.1 L975.0 373.8 L976.0 368.2 L977.0 373.3 L978.0 364.5 L979.0 362.5 L980.0 366.9 L981.0 371.1 L982.0 369.6 L983.0 368.3 L984.0 360.6 L985.0 363.1 L986.0 364.5 L987.0 363.9 L988.0 365.5 L989.0 360.4 L990.0 361.5 L991.0 357.0 L992.0 352.2 L993.0 352.8 L994.0 353.7 L995.0 355.2 L996.0 349.3 L997.0 348.3 L998.0 342.6 L999.0 353.6 L1000.0 356.9 L1001.0 352.7 L1002.0 352.1 L1003.0 350.7 L1004.0 357.8 L1005.0 361.1 L1006.0 367.6 L1007.0 360.3 L1008.0 353.0 L1009.0 343.0 L1010.0 355.4 L1011.0 352.1 L1012.0 342.2 L1013.0 346.3 L1014.0 338.0 L1015.0 357.8 L1016.0 351.1 L1017.0 348.7 L1018.0 345.9 L1019.0 337.6 L1020.0 345.6 L1021.0 342.5 L1022.0 352.2 L1023.0 344.2 L1024.0 346.2 L1025.0 354.7 L1026.0 357.8 L1027.0 345.3 L1028.0 339.6 L1029.0 348.0 L1030.0 349.0 L1031.0 340.2 L1032.0 338.9 L1033.0 338.0 L1034.0 335.0 L1035.0 336.0 L1036.0 344.9 L1037.0 343.9 L1038.0 353.2 L1039.0 347.9 L1040.0 348.7 L1041.0 347.6 L1042.0 352.4 L1043.0 349.6 L1044.0 348.1 L1045.0 358.8 L1046.0 365.3 L1047.0 365.6 L1048.0 368.6 L1049.0 366.2 L1050.0 363.0 L1051.0 365.9 L1052.0 365.1 L1053.0 362.6 L1054.0 360.1 L1055.0 360.6 L1056.0 366.4 L1057.0 368.7 L1058.0 367.4 L1059.0 374.1 L1060.0 371.6 L1061.0 372.1 L1062.0 374.3 L1063.0 367.5 L1064.0 361.5 L1065.0 369.6 L1066.0 366.3 L1067.0 372.5 L1068.0 370.4 L1069.0 372.2 L1070.0 370.6 L1071.0 358.7 L1072.0 365.2 L1073.0 360.7 L1074.0 358.2 L1075.0 357.9 L1076.0 361.6 L1077.0 365.9 L1078.0 371.1 L1079.0 366.2 L1080.0 372.2 L1081.0 364.6 L1082.0 369.1 L1083.0 371.2 L1084.0 365.5 L1085.0 366.4 L1086.0 365.2 L1087.0 366.5 L1088.0 358.4 L1089.0 354.8 L1090.0 352.8 L1091.0 361.2 L1092.0 362.7 L1093.0 359.4 L1094.0 361.2 L1095.0 362.5 L1096.0 364.4 L1097.0 363.1 L1098.0 361.1 L1099.0 356.1 L1100.0 356.2 L1101.0 364.5 L1102.0 361.2 L1103.0 357.6 L1104.0 354.6 L1105.0 354.1 L1106.0 354.1 L1107.0 348.5 L1108.0 349.4 L1109.0 348.5 L1110.0 342.6 L1111.0 339.6 L1112.0 336.5 L1113.0 334.1 L1114.0 345.3 L1115.0 335.1 L1116.0 343.8 L1117.0 346.2 L1118.0 348.6 L1119.0 352.1 L1120.0 355.8 L1121.0 351.0 L1122.0 347.8 L1123.0 343.7 L1124.0 343.7 L1125.0 347.4 L1126.0 340.6 L1127.0 331.6 L1128.0 325.6 L1129.0 321.6 L1130.0 317.1 L1131.0 327.8 L1132.0 324.9 L1133.0 319.3 L1134.0 325.9 L1135.0 315.7 L1136.0 321.4 L1137.0 324.8 L1138.0 315.5 L1139.0 315.5 L1140.0 317.6 L1141.0 327.6 L1142.0 330.4 L1143.0 315.9 L1144.0 323.4 L1145.0 315.8 L1146.0 315.5 L1147.0 315.5 L1148.0 315.5 L1149.0 315.5 L1150.0 315.5 L1151.0 315.5 L1152.0 323.3 L1153.0 335.6 L1154.0 343.0 L1155.0 329.6 L1156.0 320.2 L1157.0 325.8 L1158.0 325.5 L1159.0 341.2 L1160.0 339.1 L1161.0 333.1 L1162.0 340.4 L1163.0 341.0 L1164.0 331.5 L1165.0 335.1 L1166.0 338.2 L1167.0 340.9 L1168.0 342.8 L1169.0 341.9 L1170.0 345.1 L1171.0 344.0 L1172.0 343.9 L1173.0 355.8 L1174.0 355.2 L1175.0 356.8 L1176.0 350.3 L1177.0 356.0 L1178.0 362.7 L1179.0 357.2 L1180.0 366.0 L1181.0 363.5 L1182.0 366.9 L1183.0 366.8 L1184.0 368.9 L1185.0 373.4 L1186.0 369.4 L1187.0 375.9 L1188.0 370.0 L1189.0 368.6 L1190.0 374.5 L1191.0 370.5 L1192.0 372.5 L1193.0 377.8 L1194.0 378.7 L1195.0 367.9 L1196.0 372.0 L1197.0 377.0 L1198.0 374.9 L1199.0 368.3 L1200.0 364.3 L1201.0 364.8 L1202.0 362.3 L1203.0 365.3 L1204.0 366.7 L1205.0 367.6 L1206.0 372.9 L1207.0 369.6 L1208.0 364.8 L1209.0 372.8 L1210.0 367.8 L1211.0 369.1 L1212.0 371.6 L1213.0 372.7 L1214.0 372.0 L1215.0 375.5 L1216.0 385.2 L1217.0 379.9 L1218.0 381.2 L1219.0 386.3 L1220.0 387.0 L1221.0 388.0 L1222.0 389.2 L1223.0 382.2 L1224.0 384.3 L1225.0 388.4 L1226.0 391.1 L1227.0 394.7 L1228.0 393.9 L1229.0 391.9 L1230.0 392.3 L1231.0 392.0 L1232.0 393.3 L1233.0 394.9 L1234.0 392.9 L1235.0 391.3 L1236.0 391.0 L1237.0 396.2 L1238.0 398.1 L1239.0 397.9 L1240.0 397.0 L1241.0 396.3 L1242.0 393.7 L1243.0 394.4 L1244.0 389.7 L1245.0 390.4 L1246.0 388.7 L1247.0 391.9 L1248.0 388.8 L1249.0 389.9 L1250.0 391.9 L1251.0 395.3 L1252.0 390.8 L1253.0 389.7 L1254.0 394.4 L1255.0 390.9 L1256.0 394.5 L1257.0 393.1 L1258.0 394.3 L1259.0 390.7 L1260.0 396.5 L1261.0 395.2 L1262.0 393.7 L1263.0 400.7 L1264.0 399.0 L1265.0 405.4 L1266.0 399.3 L1267.0 395.8 L1268.0 396.1 L1269.0 399.8 L1270.0 396.6 L1271.0 396.9 L1272.0 397.1 L1273.0 393.6 L1274.0 395.1 L1275.0 393.4 L1276.0 390.7 L1277.0 395.1 L1278.0 395.3 L1279.0 393.5 L1280.0 390.0 L1281.0 385.9 L1282.0 391.1 L1283.0 390.5 L1284.0 385.7 L1285.0 388.7 L1286.0 385.7 L1287.0 389.0 L1288.0 390.4 L1289.0 391.4 L1290.0 391.3 L1291.0 391.3 L1292.0 387.8 L1293.0 389.0 L1294.0 389.1 L1295.0 389.9 L1296.0 391.5 L1297.0 392.9 L1298.0 396.1 L1299.0 385.7 L1300.0 391.1 L1301.0 390.9 L1302.0 397.5 L1303.0 395.5 L1304.0 386.7 L1305.0 389.1 L1306.0 386.2 L1307.0 388.8 L1308.0 382.5 L1309.0 383.7 L1310.0 384.4 L1311.0 385.0 L1312.0 384.0 L1313.0 380.5 L1314.0 386.5 L1315.0 389.8 L1316.0 387.9 L1317.0 385.1 L1318.0 387.3 L1319.0 387.9 L1320.0 385.0 L1321.0 383.9 L1322.0 387.0 L1323.0 379.3 L1324.0 378.2 L1325.0 372.8 L1326.0 374.3 L1327.0 373.7 L1328.0 371.9 L1329.0 371.7 L1330.0 379.7 L1331.0 374.7 L1332.0 373.3 L1333.0 380.5 L1334.0 374.2 L1335.0 366.5 L1336.0 371.6 L1337.0 367.8 L1338.0 375.5 L1339.0 366.9 L1340.0 366.7 L1341.0 362.7 L1342.0 367.3 L1343.0 364.1 L1344.0 366.1 L1345.0 364.8 L1346.0 363.0 L1347.0 367.8 L1348.0 368.3 L1349.0 364.6 L1350.0 359.4 L1351.0 356.7 L1352.0 360.7 L1353.0 369.8 L1354.0 360.8 L1355.0 357.1 L1356.0 356.4 L1357.0 354.5 L1358.0 354.4 L1359.0 357.2 L1360.0 364.2 L1361.0 360.2 L1362.0 356.9 L1363.0 351.4 L1364.0 357.1 L1365.0 357.3 L1366.0 352.2 L1367.0 351.2 L1368.0 355.0 L1369.0 359.9 L1370.0 359.4 L1371.0 357.2 L1372.0 354.3 L1373.0 356.4 L1374.0 356.0 L1375.0 365.2 L1376.0 354.5 L1377.0 355.3 L1378.0 362.4 L1379.0 358.5 L1380.0 364.4 L1381.0 359.4 L1382.0 358.5 L1383.0 355.8 L1384.0 350.7 L1385.0 350.6 L1386.0 363.3 L1387.0 359.6 L1388.0 365.4 L1389.0 373.1 L1390.0 378.6 L1391.0 386.4 L1392.0 389.7 L1393.0 390.7 L1394.0 388.0 L1395.0 378.9 L1396.0 368.8 L1397.0 368.6 L1398.0 366.6 L1399.0 369.1 L1400.0 363.8 L1401.0 360.0 L1402.0 360.6 L1403.0 366.9 L1404.0 362.3 L1405.0 363.4 L1406.0 364.2 L1407.0 366.4 L1408.0 370.3 L1409.0 374.0 L1410.0 368.6 L1411.0 380.7 L1412.0 382.9 L1413.0 386.0 L1414.0 394.1 L1415.0 380.2 L1416.0 377.7 L1417.0 367.7 L1418.0 361.3 L1419.0 373.1 L1420.0 382.9 L1421.0 389.0 L1422.0 391.4 L1423.0 389.6 L1424.0 385.8 L1425.0 378.2 L1426.0 381.9 L1427.0 372.2 L1428.0 373.9 L1429.0 382.7 L1430.0 390.3 L1431.0 399.1 L1432.0 409.8 L1433.0 419.0 L1434.0 402.8 L1435.0 388.1 L1436.0 368.6 L1437.0 364.1 L1438.0 358.4 L1439.0 359.0 L1440.0 352.8 L1441.0 351.1 L1442.0 352.0 L1443.0 344.4 L1444.0 359.3 L1445.0 352.5 L1446.0 350.9 L1447.0 348.0 L1448.0 357.5 L1449.0 359.2 L1450.0 355.3 L1451.0 347.6 L1452.0 349.6 L1453.0 355.0 L1454.0 351.2 L1455.0 347.1 L1456.0 345.7 L1457.0 346.8 L1458.0 350.1 L1459.0 347.8 L1460.0 349.8 L1461.0 362.0 L1462.0 360.4 L1463.0 346.3 L1464.0 347.2 L1465.0 344.8 L1466.0 341.7 L1467.0 345.0 L1468.0 337.7 L1469.0 334.4 L1470.0 331.8 L1471.0 331.0 L1472.0 337.4 L1473.0 336.4 L1474.0 325.2 L1475.0 326.8 L1476.0 325.2 L1477.0 332.9 L1478.0 331.6 L1479.0 333.7 L1480.0 326.8 L1481.0 315.5 L1482.0 320.2 L1483.0 318.7 L1483.3 316.6 L1484.0 315.5 L1485.0 320.5 L1486.0 320.7 L1487.0 323.1 L1488.0 331.3" fill="none" stroke="#7285cf" stroke-width="2.4" stroke-linejoin="round"/>
<path d="M852.0 385.7 L853.0 384.9 L854.0 394.0 L855.0 389.3 L856.0 387.6 L857.0 388.2 L858.0 386.3 L859.0 385.7 L860.0 388.9 L861.0 387.7 L862.0 390.8 L863.0 389.5 L864.0 385.9 L865.0 386.8 L866.0 388.8 L867.0 387.4 L868.0 392.0 L869.0 393.4 L870.0 397.1 L871.0 394.7 L872.0 396.2 L873.0 397.8 L874.0 398.4 L875.0 394.7 L876.0 399.1 L877.0 395.4 L878.0 398.3 L879.0 395.6 L880.0 394.5 L881.0 392.7 L882.0 395.0 L883.0 401.3 L884.0 396.7 L885.0 400.4 L886.0 401.2 L887.0 398.0 L888.0 400.7 L889.0 402.2 L890.0 399.3 L891.0 398.5 L892.0 401.9 L893.0 401.5 L894.0 405.2 L895.0 403.0 L896.0 399.4 L897.0 400.9 L898.0 399.1 L899.0 402.7 L900.0 403.6 L901.0 401.8 L902.0 400.6 L903.0 403.9 L904.0 402.4 L905.0 405.2 L906.0 401.9 L907.0 402.5 L908.0 402.3 L909.0 401.5 L910.0 408.5 L911.0 408.4 L912.0 404.3 L913.0 406.0 L914.0 401.6 L915.0 406.2 L916.0 407.0 L917.0 404.6 L918.0 403.9 L919.0 404.9 L920.0 405.5 L921.0 404.2 L922.0 402.9 L923.0 403.7 L924.0 403.6 L925.0 405.8 L926.0 405.1 L927.0 405.2 L928.0 401.7 L929.0 403.2 L930.0 403.5 L931.0 403.4 L932.0 404.1 L933.0 403.8 L934.0 401.4 L935.0 405.3 L936.0 406.1 L937.0 403.6 L938.0 405.0 L939.0 402.4 L940.0 401.0 L941.0 402.6 L942.0 406.2 L943.0 403.9 L944.0 400.6 L945.0 403.0 L946.0 402.0 L947.0 401.4 L948.0 403.2 L949.0 399.6 L950.0 398.5 L951.0 396.5 L952.0 399.5 L953.0 396.4 L954.0 392.4 L955.0 389.4 L956.0 390.2 L957.0 390.2 L958.0 385.5 L959.0 387.0 L960.0 392.8 L961.0 389.9 L962.0 387.1 L963.0 388.1 L964.0 387.9 L965.0 389.4 L966.0 389.1 L967.0 387.1 L968.0 387.6 L969.0 388.6 L970.0 385.8 L971.0 386.6 L972.0 384.0 L973.0 388.3 L974.0 389.9 L975.0 383.8 L976.0 386.3 L977.0 384.8 L978.0 383.8 L979.0 382.3 L980.0 382.7 L981.0 384.1 L982.0 377.8 L983.0 381.7 L984.0 378.5 L985.0 374.7 L986.0 376.0 L987.0 377.7 L988.0 375.4 L989.0 375.3 L990.0 372.8 L991.0 370.9 L992.0 374.4 L993.0 369.5 L994.0 374.0 L995.0 373.0 L996.0 370.8 L997.0 370.3 L998.0 369.9 L999.0 370.5 L1000.0 370.5 L1001.0 370.1 L1002.0 364.4 L1003.0 362.4 L1004.0 369.2 L1005.0 367.9 L1006.0 367.6 L1007.0 368.6 L1008.0 365.9 L1009.0 373.2 L1010.0 370.1 L1011.0 368.7 L1012.0 365.5 L1013.0 370.6 L1014.0 371.3 L1015.0 373.7 L1016.0 372.3 L1017.0 366.4 L1018.0 363.3 L1019.0 370.6 L1020.0 365.8 L1021.0 366.2 L1022.0 365.9 L1023.0 367.7 L1024.0 367.6 L1025.0 361.7 L1026.0 360.7 L1027.0 356.1 L1028.0 361.8 L1029.0 360.0 L1030.0 353.7 L1031.0 360.6 L1032.0 358.1 L1033.0 352.8 L1034.0 352.3 L1035.0 350.3 L1036.0 351.2 L1037.0 350.6 L1038.0 350.8 L1039.0 356.6 L1040.0 349.8 L1041.0 358.0 L1042.0 365.0 L1043.0 369.3 L1044.0 371.4 L1045.0 368.0 L1046.0 367.0 L1047.0 372.3 L1048.0 382.6 L1049.0 381.2 L1050.0 379.9 L1051.0 378.2 L1052.0 382.3 L1053.0 381.9 L1054.0 384.4 L1055.0 384.4 L1056.0 378.1 L1057.0 382.3 L1058.0 385.8 L1059.0 383.3 L1060.0 381.3 L1061.0 380.6 L1062.0 379.9 L1063.0 388.4 L1064.0 388.4 L1065.0 383.2 L1066.0 386.8 L1067.0 381.3 L1068.0 381.1 L1069.0 380.4 L1070.0 382.3 L1071.0 385.4 L1072.0 390.0 L1073.0 388.3 L1074.0 386.3 L1075.0 386.9 L1076.0 386.5 L1077.0 388.3 L1078.0 386.3 L1079.0 388.6 L1080.0 390.0 L1081.0 391.7 L1082.0 388.3 L1083.0 390.6 L1084.0 389.3 L1085.0 382.4 L1086.0 374.3 L1087.0 372.8 L1088.0 373.4 L1089.0 367.0 L1090.0 370.4 L1091.0 362.7 L1092.0 359.9 L1093.0 362.9 L1094.0 367.2 L1095.0 370.1 L1096.0 370.3 L1097.0 372.9 L1098.0 380.5 L1099.0 376.2 L1100.0 372.8 L1101.0 369.9 L1102.0 365.1 L1103.0 369.6 L1104.0 368.8 L1105.0 369.6 L1106.0 367.8 L1107.0 370.4 L1108.0 371.3 L1109.0 365.3 L1110.0 361.0 L1111.0 364.4 L1112.0 367.9 L1113.0 365.0 L1114.0 363.7 L1115.0 356.8 L1116.0 358.6 L1117.0 363.2 L1118.0 364.1 L1119.0 363.6 L1120.0 365.7 L1121.0 367.6 L1122.0 366.0 L1123.0 363.6 L1124.0 361.3 L1125.0 361.5 L1126.0 357.3 L1127.0 353.1 L1128.0 353.7 L1129.0 344.3 L1130.0 342.5 L1131.0 345.6 L1132.0 340.0 L1133.0 333.4 L1134.0 337.8 L1135.0 344.1 L1136.0 339.9 L1137.0 340.1 L1138.0 333.6 L1139.0 343.8 L1140.0 334.6 L1141.0 336.9 L1142.0 340.0 L1143.0 349.5 L1144.0 345.3 L1145.0 341.5 L1146.0 338.1 L1147.0 342.3 L1148.0 340.4 L1149.0 342.7 L1150.0 346.3 L1151.0 352.0 L1152.0 345.2 L1153.0 352.8 L1154.0 342.9 L1155.0 354.9 L1156.0 348.8 L1157.0 348.5 L1158.0 348.4 L1159.0 351.2 L1160.0 351.2 L1161.0 349.9 L1162.0 347.1 L1163.0 346.0 L1164.0 348.2 L1165.0 349.1 L1166.0 350.7 L1167.0 350.5 L1168.0 357.3 L1169.0 362.4 L1170.0 360.7 L1171.0 368.5 L1172.0 368.1 L1173.0 369.6 L1174.0 365.7 L1175.0 372.7 L1176.0 377.3 L1177.0 381.5 L1178.0 376.6 L1179.0 377.5 L1180.0 380.4 L1181.0 381.2 L1182.0 378.9 L1183.0 380.7 L1184.0 384.2 L1185.0 384.5 L1186.0 383.7 L1187.0 386.8 L1188.0 381.5 L1189.0 384.8 L1190.0 383.0 L1191.0 383.2 L1192.0 386.2 L1193.0 389.2 L1194.0 386.8 L1195.0 385.4 L1196.0 388.8 L1197.0 387.4 L1198.0 379.8 L1199.0 381.8 L1200.0 382.2 L1201.0 382.3 L1202.0 380.3 L1203.0 385.0 L1204.0 385.1 L1205.0 388.9 L1206.0 385.1 L1207.0 385.7 L1208.0 384.2 L1209.0 388.5 L1210.0 390.6 L1211.0 392.5 L1212.0 391.9 L1213.0 388.5 L1214.0 392.2 L1215.0 388.8 L1216.0 389.2 L1217.0 390.9 L1218.0 396.8 L1219.0 392.8 L1220.0 391.8 L1221.0 394.8 L1222.0 398.0 L1223.0 398.1 L1224.0 398.7 L1225.0 396.1 L1226.0 396.5 L1227.0 400.1 L1228.0 398.8 L1229.0 397.2 L1230.0 397.5 L1231.0 401.1 L1232.0 402.9 L1233.0 400.9 L1234.0 398.2 L1235.0 402.5 L1236.0 399.3 L1237.0 400.1 L1238.0 401.0 L1239.0 400.6 L1240.0 400.4 L1241.0 403.9 L1242.0 402.4 L1243.0 398.9 L1244.0 399.8 L1245.0 403.7 L1246.0 402.1 L1247.0 400.2 L1248.0 403.5 L1249.0 403.7 L1250.0 403.0 L1251.0 404.0 L1252.0 402.6 L1253.0 403.5 L1254.0 404.5 L1255.0 402.9 L1256.0 405.9 L1257.0 402.7 L1258.0 407.6 L1259.0 405.4 L1260.0 405.5 L1261.0 402.8 L1262.0 405.5 L1263.0 403.2 L1264.0 404.8 L1265.0 404.3 L1266.0 402.6 L1267.0 406.6 L1268.0 404.7 L1269.0 402.8 L1270.0 402.5 L1271.0 403.6 L1272.0 403.2 L1273.0 404.5 L1274.0 402.1 L1275.0 402.8 L1276.0 401.6 L1277.0 400.8 L1278.0 403.3 L1279.0 400.8 L1280.0 398.6 L1281.0 402.3 L1282.0 401.0 L1283.0 402.7 L1284.0 403.0 L1285.0 403.0 L1286.0 402.1 L1287.0 404.7 L1288.0 400.4 L1289.0 403.4 L1290.0 401.7 L1291.0 402.1 L1292.0 400.8 L1293.0 402.9 L1294.0 402.6 L1295.0 400.8 L1296.0 401.2 L1297.0 402.1 L1298.0 401.0 L1299.0 405.4 L1300.0 402.7 L1301.0 399.9 L1302.0 401.7 L1303.0 400.5 L1304.0 398.5 L1305.0 398.1 L1306.0 395.3 L1307.0 399.0 L1308.0 401.2 L1309.0 398.3 L1310.0 396.0 L1311.0 393.3 L1312.0 393.4 L1313.0 395.6 L1314.0 394.7 L1315.0 395.2 L1316.0 393.6 L1317.0 394.3 L1318.0 394.1 L1319.0 394.5 L1320.0 394.2 L1321.0 394.0 L1322.0 391.5 L1323.0 391.7 L1324.0 389.4 L1325.0 390.1 L1326.0 391.0 L1327.0 391.9 L1328.0 387.9 L1329.0 387.5 L1330.0 388.0 L1331.0 386.3 L1332.0 387.6 L1333.0 387.9 L1334.0 386.4 L1335.0 391.1 L1336.0 387.3 L1337.0 387.6 L1338.0 382.7 L1339.0 387.2 L1340.0 386.9 L1341.0 386.2 L1342.0 380.1 L1343.0 383.3 L1344.0 382.3 L1345.0 384.4 L1346.0 383.5 L1347.0 381.8 L1348.0 381.2 L1349.0 385.0 L1350.0 385.3 L1351.0 378.0 L1352.0 379.1 L1353.0 382.7 L1354.0 381.9 L1355.0 384.2 L1356.0 384.0 L1357.0 389.4 L1358.0 388.3 L1359.0 381.9 L1360.0 381.6 L1361.0 376.6 L1362.0 377.1 L1363.0 371.4 L1364.0 366.6 L1365.0 371.7 L1366.0 370.5 L1367.0 364.8 L1368.0 357.0 L1369.0 366.1 L1370.0 368.1 L1371.0 365.9 L1372.0 366.8 L1373.0 369.0 L1374.0 365.5 L1375.0 372.6 L1376.0 367.3 L1377.0 370.1 L1378.0 371.0 L1379.0 370.1 L1380.0 369.3 L1381.0 373.4 L1382.0 367.3 L1383.0 370.2 L1384.0 375.4 L1385.0 369.7 L1386.0 366.0 L1387.0 367.8 L1388.0 361.1 L1389.0 365.5 L1390.0 376.5 L1391.0 388.3 L1392.0 399.4 L1392.6 408.0 L1393.0 405.5 L1394.0 396.6 L1395.0 394.0 L1396.0 383.0 L1397.0 384.6 L1398.0 378.9 L1399.0 374.8 L1400.0 373.5 L1401.0 376.9 L1402.0 372.6 L1403.0 369.6 L1404.0 363.9 L1405.0 368.8 L1406.0 370.2 L1407.0 371.4 L1408.0 371.6 L1409.0 370.5 L1410.0 384.6 L1411.0 388.1 L1412.0 397.8 L1413.0 402.7 L1414.0 395.1 L1415.0 388.0 L1416.0 382.4 L1417.0 379.3 L1418.0 384.8 L1419.0 391.1 L1420.0 396.4 L1421.0 400.7 L1422.0 406.4 L1423.0 402.2 L1424.0 397.7 L1425.0 399.0 L1426.0 397.4 L1427.0 392.6 L1428.0 391.7 L1429.0 387.9 L1430.0 391.9 L1431.0 392.6 L1432.0 399.1 L1433.0 395.2 L1434.0 398.7 L1435.0 392.4 L1436.0 384.6 L1437.0 389.6 L1438.0 384.0 L1439.0 383.1 L1440.0 384.2 L1441.0 376.9 L1442.0 377.1 L1443.0 378.0 L1444.0 380.5 L1445.0 376.6 L1446.0 376.9 L1447.0 369.8 L1448.0 373.6 L1449.0 369.7 L1450.0 369.6 L1451.0 370.1 L1452.0 371.8 L1453.0 366.8 L1454.0 368.3 L1455.0 365.9 L1456.0 367.5 L1457.0 364.0 L1458.0 368.3 L1459.0 361.2 L1460.0 358.8 L1461.0 364.9 L1462.0 359.5 L1463.0 361.4 L1464.0 360.8 L1465.0 351.5 L1466.0 352.6 L1467.0 351.0 L1468.0 350.7 L1469.0 344.5 L1470.0 347.7 L1471.0 347.4 L1472.0 340.4 L1473.0 340.4 L1474.0 338.9 L1475.0 328.4 L1476.0 334.8 L1477.0 341.5 L1478.0 343.7 L1479.0 338.3 L1480.0 339.5 L1481.0 343.1 L1482.0 344.8 L1483.0 346.5 L1484.0 343.7 L1485.0 345.4 L1486.0 339.9 L1487.0 347.8 L1488.0 341.6" fill="none" stroke="#d8f0f2" stroke-width="2.4" stroke-linejoin="round"/>
<path d="M852.0 391.5 L853.0 391.3 L854.0 392.7 L855.0 389.7 L856.0 386.9 L857.0 384.1 L858.0 388.4 L859.0 387.8 L860.0 387.5 L861.0 387.3 L862.0 384.5 L863.0 390.8 L864.0 390.7 L865.0 393.5 L866.0 398.5 L867.0 396.3 L868.0 396.6 L869.0 399.3 L870.0 397.6 L871.0 398.1 L872.0 395.7 L873.0 395.8 L874.0 399.3 L874.8 439.4 L875.0 440.0 L876.0 439.2 L877.0 439.2 L877.5 439.4 L878.0 404.6 L879.0 403.9 L880.0 402.4 L881.0 404.7 L882.0 407.6 L883.0 403.5 L884.0 405.8 L885.0 406.4 L886.0 405.6 L887.0 406.9 L888.0 408.2 L889.0 406.4 L890.0 405.3 L891.0 407.5 L892.0 406.8 L893.0 407.2 L894.0 410.3 L895.0 408.2 L896.0 406.9 L897.0 404.2 L898.0 406.7 L899.0 407.4 L900.0 408.0 L901.0 408.2 L902.0 408.5 L903.0 407.8 L904.0 407.4 L905.0 408.2 L906.0 406.1 L907.0 405.1 L908.0 404.8 L909.0 406.8 L910.0 403.9 L911.0 405.6 L912.0 406.6 L913.0 407.8 L914.0 405.7 L915.0 407.2 L916.0 407.6 L917.0 406.6 L918.0 407.5 L919.0 407.4 L920.0 405.6 L921.0 406.7 L922.0 405.9 L923.0 410.9 L924.0 408.3 L925.0 406.9 L926.0 405.2 L927.0 407.4 L928.0 408.6 L929.0 408.4 L930.0 405.8 L931.0 405.8 L932.0 405.7 L933.0 408.0 L934.0 406.6 L935.0 407.6 L936.0 411.2 L937.0 405.5 L938.0 406.9 L939.0 407.6 L940.0 405.1 L941.0 409.1 L942.0 407.6 L943.0 408.4 L944.0 408.9 L945.0 410.6 L946.0 407.2 L947.0 406.3 L948.0 404.9 L949.0 404.5 L950.0 410.0 L951.0 405.3 L952.0 400.1 L953.0 402.3 L954.0 403.7 L955.0 396.8 L956.0 395.6 L957.0 390.8 L958.0 388.2 L959.0 391.9 L960.0 390.5 L961.0 390.1 L962.0 392.9 L963.0 394.5 L964.0 393.4 L965.0 396.7 L966.0 392.9 L967.0 392.7 L968.0 395.6 L969.0 400.0 L970.0 401.2 L971.0 399.5 L972.0 397.8 L973.0 394.6 L974.0 400.6 L975.0 399.2 L976.0 403.8 L977.0 399.1 L978.0 392.6 L979.0 397.2 L980.0 395.4 L981.0 392.5 L982.0 392.7 L983.0 391.7 L984.0 391.4 L985.0 385.3 L986.0 387.6 L987.0 388.2 L988.0 382.4 L989.0 386.5 L990.0 382.2 L991.0 374.3 L992.0 381.6 L993.0 376.3 L994.0 374.9 L995.0 372.4 L996.0 378.1 L997.0 374.5 L998.0 371.9 L999.0 372.0 L1000.0 376.4 L1001.0 378.2 L1002.0 375.4 L1003.0 380.1 L1004.0 377.0 L1005.0 379.2 L1006.0 380.1 L1007.0 379.2 L1008.0 378.4 L1009.0 377.8 L1010.0 374.8 L1011.0 375.8 L1012.0 376.0 L1013.0 370.6 L1014.0 368.2 L1015.0 374.6 L1016.0 376.2 L1017.0 378.2 L1018.0 381.5 L1019.0 382.2 L1020.0 380.8 L1021.0 384.5 L1022.0 383.1 L1023.0 390.3 L1024.0 389.0 L1025.0 384.5 L1026.0 380.3 L1027.0 381.3 L1028.0 378.5 L1029.0 374.8 L1030.0 376.5 L1031.0 374.5 L1032.0 375.2 L1033.0 370.6 L1034.0 375.0 L1035.0 374.1 L1036.0 360.9 L1037.0 354.5 L1038.0 361.9 L1039.0 375.3 L1040.0 379.0 L1041.0 381.7 L1042.0 384.3 L1043.0 380.9 L1044.0 384.6 L1045.0 382.8 L1046.0 386.3 L1047.0 386.3 L1048.0 386.5 L1049.0 387.1 L1050.0 390.7 L1051.0 395.3 L1052.0 387.5 L1053.0 391.8 L1054.0 390.3 L1055.0 394.9 L1056.0 395.2 L1057.0 390.7 L1058.0 392.1 L1059.0 412.0 L1060.0 396.8 L1061.0 390.6 L1062.0 387.7 L1063.0 390.5 L1064.0 394.0 L1065.0 394.0 L1066.0 392.6 L1067.0 392.9 L1068.0 393.1 L1069.0 392.2 L1070.0 389.7 L1071.0 393.3 L1072.0 394.4 L1073.0 396.5 L1074.0 395.6 L1075.0 395.1 L1076.0 398.5 L1077.0 400.4 L1078.0 403.6 L1079.0 398.4 L1080.0 399.8 L1081.0 399.8 L1082.0 404.5 L1083.0 395.7 L1084.0 400.2 L1085.0 397.1 L1086.0 395.4 L1087.0 398.7 L1088.0 396.7 L1089.0 383.3 L1090.0 381.6 L1091.0 381.5 L1092.0 380.7 L1093.0 384.9 L1094.0 380.2 L1095.0 380.4 L1096.0 374.8 L1097.0 380.9 L1098.0 380.8 L1099.0 382.5 L1100.0 378.6 L1101.0 384.8 L1102.0 378.9 L1103.0 384.2 L1104.0 385.6 L1105.0 377.7 L1106.0 378.8 L1107.0 376.4 L1108.0 372.1 L1109.0 377.8 L1110.0 377.4 L1111.0 381.1 L1112.0 382.6 L1113.0 372.7 L1114.0 374.2 L1115.0 376.5 L1116.0 378.2 L1117.0 376.3 L1118.0 372.6 L1119.0 373.1 L1120.0 375.8 L1121.0 370.1 L1122.0 368.2 L1123.0 369.6 L1124.0 372.9 L1125.0 380.8 L1126.0 377.5 L1127.0 376.0 L1128.0 374.8 L1129.0 371.1 L1130.0 363.9 L1131.0 357.7 L1132.0 353.4 L1133.0 348.1 L1134.0 345.5 L1135.0 349.2 L1136.0 351.5 L1137.0 345.4 L1138.0 342.1 L1139.0 345.5 L1140.0 348.4 L1141.0 353.8 L1142.0 354.3 L1143.0 355.5 L1144.0 351.3 L1145.0 354.2 L1146.0 355.8 L1147.0 355.4 L1148.0 359.7 L1149.0 359.5 L1150.0 356.9 L1151.0 361.0 L1152.0 364.8 L1153.0 370.3 L1154.0 363.0 L1155.0 359.9 L1156.0 364.1 L1157.0 368.2 L1158.0 361.4 L1159.0 364.1 L1160.0 361.9 L1161.0 365.8 L1162.0 362.1 L1163.0 363.0 L1164.0 364.6 L1165.0 366.2 L1166.0 363.7 L1167.0 367.3 L1168.0 367.2 L1169.0 376.6 L1170.0 378.2 L1171.0 373.3 L1172.0 373.4 L1173.0 376.9 L1174.0 375.9 L1175.0 376.6 L1176.0 381.2 L1177.0 384.4 L1178.0 384.3 L1179.0 387.5 L1180.0 385.1 L1181.0 384.6 L1182.0 384.4 L1183.0 384.8 L1184.0 384.6 L1185.0 390.9 L1186.0 391.7 L1187.0 389.8 L1188.0 390.1 L1189.0 387.7 L1190.0 390.9 L1191.0 389.7 L1192.0 389.4 L1193.0 388.9 L1194.0 385.9 L1195.0 387.4 L1196.0 393.0 L1197.0 388.5 L1198.0 387.2 L1199.0 388.5 L1200.0 387.1 L1201.0 386.6 L1202.0 386.1 L1203.0 386.5 L1204.0 388.9 L1205.0 383.8 L1206.0 384.9 L1207.0 386.1 L1208.0 390.4 L1209.0 389.8 L1210.0 393.4 L1211.0 392.0 L1212.0 396.6 L1213.0 391.9 L1214.0 399.5 L1215.0 395.0 L1216.0 396.1 L1217.0 395.2 L1218.0 397.0 L1219.0 401.5 L1220.0 401.5 L1221.0 398.9 L1222.0 400.7 L1223.0 404.1 L1224.0 403.0 L1225.0 401.0 L1226.0 402.2 L1227.0 403.0 L1228.0 399.0 L1229.0 400.8 L1230.0 402.8 L1231.0 407.1 L1232.0 406.2 L1233.0 405.4 L1234.0 402.0 L1235.0 403.6 L1236.0 402.3 L1237.0 405.3 L1238.0 405.1 L1239.0 407.9 L1240.0 407.4 L1241.0 407.7 L1242.0 408.6 L1243.0 409.9 L1244.0 408.0 L1245.0 407.1 L1246.0 408.2 L1247.0 413.8 L1248.0 408.5 L1249.0 406.7 L1250.0 408.4 L1251.0 405.4 L1252.0 408.5 L1253.0 406.1 L1254.0 407.1 L1255.0 407.4 L1256.0 406.4 L1257.0 408.5 L1258.0 408.2 L1259.0 409.9 L1260.0 409.6 L1261.0 407.7 L1262.0 409.2 L1263.0 409.3 L1264.0 408.4 L1265.0 408.3 L1266.0 409.8 L1267.0 406.9 L1268.0 409.6 L1269.0 408.3 L1270.0 408.5 L1271.0 409.4 L1272.0 412.5 L1273.0 406.6 L1274.0 404.2 L1275.0 408.1 L1276.0 406.2 L1277.0 406.5 L1278.0 403.7 L1279.0 407.7 L1280.0 407.2 L1281.0 403.4 L1282.0 407.3 L1283.0 406.2 L1284.0 404.9 L1285.0 402.2 L1286.0 408.3 L1287.0 404.5 L1288.0 406.5 L1289.0 404.4 L1290.0 403.1 L1291.0 406.5 L1292.0 406.7 L1293.0 406.6 L1294.0 404.4 L1295.0 405.7 L1296.0 406.1 L1297.0 407.6 L1298.0 405.0 L1299.0 405.0 L1300.0 405.7 L1301.0 399.7 L1302.0 403.1 L1303.0 406.4 L1304.0 405.2 L1305.0 404.3 L1306.0 404.7 L1307.0 405.7 L1308.0 399.7 L1309.0 400.2 L1310.0 399.7 L1311.0 398.4 L1312.0 402.8 L1313.0 399.8 L1314.0 401.1 L1315.0 402.3 L1316.0 403.6 L1317.0 398.1 L1318.0 396.3 L1319.0 394.5 L1320.0 398.8 L1321.0 396.7 L1322.0 398.8 L1323.0 400.3 L1324.0 402.3 L1325.0 396.1 L1326.0 396.8 L1327.0 396.4 L1328.0 391.3 L1329.0 396.1 L1330.0 398.5 L1331.0 392.6 L1332.0 395.3 L1333.0 394.9 L1334.0 394.2 L1335.0 390.8 L1336.0 389.6 L1337.0 397.2 L1338.0 396.0 L1339.0 392.9 L1340.0 394.3 L1341.0 389.0 L1342.0 391.4 L1343.0 388.9 L1344.0 382.8 L1345.0 384.8 L1346.0 389.5 L1347.0 390.6 L1348.0 390.0 L1349.0 388.0 L1350.0 387.9 L1351.0 382.6 L1352.0 384.9 L1353.0 390.5 L1354.0 379.3 L1355.0 370.5 L1356.0 380.0 L1357.0 377.2 L1358.0 377.9 L1359.0 380.6 L1360.0 383.6 L1361.0 381.8 L1362.0 384.8 L1363.0 383.4 L1364.0 378.4 L1365.0 382.0 L1366.0 381.3 L1367.0 378.8 L1368.0 377.7 L1369.0 381.0 L1370.0 369.6 L1371.0 377.3 L1372.0 377.5 L1373.0 377.5 L1374.0 376.5 L1375.0 376.6 L1376.0 380.2 L1377.0 376.2 L1378.0 383.2 L1379.0 376.1 L1380.0 380.0 L1381.0 378.7 L1382.0 383.9 L1383.0 382.7 L1384.0 375.6 L1385.0 380.0 L1386.0 377.4 L1387.0 380.7 L1388.0 380.3 L1389.0 377.9 L1390.0 381.7 L1391.0 388.7 L1392.0 393.3 L1393.0 397.4 L1394.0 396.7 L1395.0 396.2 L1396.0 390.9 L1397.0 384.0 L1398.0 380.1 L1399.0 388.7 L1400.0 384.4 L1401.0 380.7 L1402.0 379.2 L1403.0 379.6 L1404.0 379.6 L1405.0 378.7 L1406.0 382.2 L1407.0 381.7 L1408.0 386.1 L1409.0 388.0 L1410.0 389.3 L1411.0 394.1 L1412.0 396.7 L1413.0 395.1 L1414.0 394.9 L1415.0 390.0 L1416.0 383.9 L1417.0 392.7 L1418.0 397.3 L1419.0 394.1 L1420.0 401.2 L1421.0 406.1 L1422.0 409.6 L1423.0 407.7 L1424.0 408.9 L1425.0 408.6 L1426.0 406.8 L1427.0 408.0 L1428.0 404.2 L1429.0 402.1 L1430.0 408.5 L1431.0 411.8 L1432.0 407.4 L1433.0 416.4 L1433.9 433.9 L1434.0 432.3 L1435.0 415.5 L1436.0 403.6 L1437.0 394.5 L1438.0 391.0 L1439.0 396.2 L1440.0 394.0 L1441.0 389.4 L1442.0 387.9 L1443.0 390.3 L1444.0 386.5 L1445.0 395.0 L1446.0 392.7 L1447.0 392.2 L1448.0 388.6 L1449.0 389.2 L1450.0 381.5 L1451.0 382.9 L1452.0 385.9 L1453.0 381.4 L1454.0 380.7 L1455.0 379.2 L1456.0 384.2 L1457.0 385.1 L1458.0 380.1 L1459.0 379.5 L1460.0 375.6 L1461.0 369.0 L1462.0 367.4 L1463.0 366.7 L1464.0 368.7 L1465.0 365.6 L1466.0 367.2 L1467.0 360.0 L1468.0 361.9 L1469.0 358.7 L1470.0 361.4 L1471.0 355.9 L1472.0 356.6 L1473.0 345.4 L1474.0 352.7 L1475.0 352.2 L1476.0 354.7 L1477.0 353.5 L1478.0 347.1 L1479.0 358.3 L1480.0 360.5 L1481.0 355.5 L1482.0 358.1 L1483.0 354.1 L1484.0 360.2 L1485.0 350.7 L1486.0 356.4 L1487.0 355.7 L1488.0 348.1" fill="none" stroke="#9356b0" stroke-width="2.4" stroke-linejoin="round"/>
<path d="M852.0 430.9 L853.0 434.0 L854.0 434.4 L855.0 433.0 L856.0 433.8 L857.0 434.6 L858.0 434.7 L859.0 434.8 L860.0 436.0 L861.0 437.0 L862.0 438.3 L863.0 436.1 L864.0 434.3 L865.0 434.8 L866.0 431.6 L867.0 428.2 L868.0 432.9 L869.0 430.6 L870.0 428.3 L871.0 430.4 L872.0 434.5 L873.0 437.1 L874.0 439.9 L875.0 438.8 L876.0 436.0 L877.0 434.6 L878.0 437.5 L879.0 436.7 L880.0 432.3 L881.0 434.7 L882.0 434.8 L883.0 435.2 L884.0 433.5 L885.0 433.3 L886.0 430.5 L887.0 428.9 L888.0 431.9 L889.0 433.8 L890.0 433.8 L891.0 432.3 L892.0 434.2 L893.0 434.9 L894.0 437.5 L895.0 436.1 L896.0 435.3 L897.0 435.2 L898.0 436.0 L899.0 437.4 L900.0 436.4 L901.0 432.6 L902.0 432.0 L903.0 436.2 L904.0 434.4 L905.0 432.8 L906.0 433.3 L907.0 433.6 L908.0 435.8 L909.0 432.6 L910.0 429.7 L911.0 428.7 L912.0 433.0 L913.0 432.1 L914.0 432.4 L915.0 433.3 L916.0 430.6 L917.0 435.5 L918.0 433.1 L919.0 432.7 L920.0 432.7 L921.0 433.7 L922.0 433.1 L923.0 432.9 L924.0 434.5 L925.0 436.1 L926.0 435.3 L927.0 431.1 L928.0 431.5 L929.0 435.1 L930.0 433.0 L931.0 432.6 L932.0 431.6 L933.0 435.0 L934.0 431.3 L935.0 430.2 L936.0 433.2 L937.0 427.7 L938.0 428.8 L939.0 436.2 L940.0 431.7 L941.0 431.4 L942.0 425.0 L943.0 427.9 L944.0 426.2 L945.0 426.2 L946.0 425.7 L947.0 427.8 L948.0 427.1 L949.0 430.4 L950.0 421.4 L951.0 423.6 L952.0 428.1 L953.0 428.0 L954.0 431.0 L955.0 425.3 L956.0 428.4 L957.0 427.2 L958.0 420.4 L959.0 416.4 L960.0 428.3 L961.0 428.1 L962.0 424.0 L963.0 419.1 L964.0 413.3 L965.0 417.9 L966.0 421.8 L967.0 428.9 L968.0 424.6 L969.0 425.0 L970.0 425.9 L971.0 430.4 L972.0 433.3 L973.0 434.1 L974.0 428.0 L975.0 428.1 L976.0 421.4 L977.0 419.9 L978.0 420.0 L979.0 423.9 L980.0 412.2 L981.0 418.2 L982.0 427.5 L983.0 425.7 L984.0 426.5 L985.0 417.5 L986.0 419.0 L987.0 413.1 L988.0 423.3 L989.0 416.0 L990.0 413.6 L991.0 411.6 L992.0 418.5 L993.0 426.5 L994.0 423.4 L995.0 423.6 L996.0 422.0 L997.0 424.6 L998.0 418.4 L999.0 416.5 L1000.0 417.0 L1001.0 423.4 L1002.0 431.3 L1003.0 435.7 L1004.0 428.9 L1005.0 427.0 L1006.0 422.8 L1007.0 421.6 L1008.0 422.3 L1009.0 411.4 L1010.0 408.6 L1011.0 403.3 L1012.0 405.9 L1013.0 416.4 L1014.0 407.9 L1015.0 416.8 L1016.0 411.0 L1017.0 408.2 L1018.0 411.3 L1019.0 410.2 L1020.0 416.0 L1021.0 417.1 L1022.0 410.6 L1023.0 415.5 L1024.0 420.6 L1025.0 417.1 L1026.0 405.7 L1027.0 417.3 L1028.0 421.4 L1029.0 407.6 L1030.0 412.4 L1031.0 418.6 L1032.0 419.2 L1033.0 421.0 L1034.0 412.8 L1035.0 422.6 L1036.0 420.4 L1037.0 418.6 L1038.0 422.1 L1039.0 425.0 L1040.0 425.2 L1041.0 418.6 L1042.0 421.4 L1043.0 414.2 L1044.0 422.1 L1045.0 417.0 L1046.0 415.6 L1047.0 421.9 L1048.0 421.2 L1049.0 416.5 L1050.0 421.5 L1051.0 427.6 L1052.0 415.6 L1053.0 419.6 L1054.0 420.7 L1055.0 421.7 L1056.0 421.8 L1057.0 425.6 L1058.0 425.6 L1059.0 423.4 L1060.0 426.3 L1061.0 421.9 L1062.0 429.3 L1063.0 424.8 L1064.0 422.9 L1065.0 425.6 L1066.0 420.9 L1067.0 419.4 L1068.0 420.8 L1069.0 428.6 L1070.0 432.4 L1071.0 432.8 L1072.0 430.3 L1073.0 427.9 L1074.0 423.0 L1075.0 420.4 L1076.0 415.3 L1077.0 412.0 L1078.0 413.9 L1079.0 423.3 L1080.0 422.7 L1081.0 419.1 L1082.0 420.6 L1083.0 414.8 L1084.0 419.7 L1085.0 418.7 L1086.0 417.8 L1087.0 422.2 L1088.0 422.2 L1089.0 431.1 L1090.0 423.6 L1091.0 425.2 L1092.0 428.1 L1093.0 428.2 L1094.0 432.4 L1095.0 428.4 L1096.0 420.4 L1097.0 421.3 L1098.0 414.7 L1099.0 421.1 L1100.0 420.5 L1101.0 423.6 L1102.0 425.0 L1103.0 417.4 L1104.0 419.1 L1105.0 418.6 L1106.0 425.3 L1107.0 419.9 L1108.0 415.8 L1109.0 414.0 L1110.0 417.5 L1111.0 407.0 L1112.0 407.7 L1113.0 406.9 L1114.0 407.4 L1115.0 419.0 L1116.0 413.6 L1117.0 426.7 L1118.0 422.1 L1119.0 421.6 L1120.0 431.3 L1121.0 416.3 L1122.0 413.8 L1123.0 412.8 L1124.0 398.4 L1125.0 403.2 L1126.0 406.6 L1127.0 412.6 L1128.0 409.7 L1129.0 414.8 L1130.0 415.5 L1131.0 407.8 L1132.0 418.3 L1133.0 419.7 L1134.0 415.6 L1135.0 413.4 L1136.0 413.8 L1137.0 414.1 L1138.0 411.0 L1139.0 406.3 L1140.0 414.2 L1141.0 411.9 L1142.0 413.2 L1143.0 417.0 L1144.0 403.0 L1145.0 407.4 L1146.0 403.1 L1147.0 403.5 L1148.0 395.4 L1149.0 407.1 L1150.0 390.4 L1151.0 397.2 L1152.0 404.5 L1153.0 409.2 L1154.0 411.8 L1155.0 405.6 L1156.0 404.7 L1157.0 400.9 L1158.0 408.5 L1159.0 421.2 L1160.0 415.3 L1161.0 422.2 L1162.0 422.2 L1163.0 415.0 L1164.0 405.7 L1165.0 405.1 L1166.0 411.0 L1167.0 416.0 L1168.0 423.8 L1169.0 417.0 L1170.0 415.6 L1171.0 420.3 L1172.0 420.1 L1173.0 418.3 L1174.0 423.6 L1175.0 418.8 L1176.0 420.8 L1177.0 419.5 L1178.0 426.6 L1179.0 422.7 L1180.0 429.8 L1181.0 424.6 L1182.0 428.4 L1183.0 422.0 L1184.0 426.7 L1185.0 428.6 L1186.0 418.6 L1187.0 429.2 L1188.0 419.9 L1189.0 421.0 L1190.0 419.7 L1191.0 423.1 L1192.0 426.1 L1193.0 427.1 L1194.0 431.9 L1195.0 430.1 L1196.0 424.9 L1197.0 424.1 L1198.0 418.3 L1199.0 423.9 L1200.0 415.4 L1201.0 411.7 L1202.0 410.7 L1203.0 425.9 L1204.0 423.7 L1205.0 421.0 L1206.0 414.2 L1207.0 419.1 L1208.0 413.7 L1209.0 422.5 L1210.0 421.2 L1211.0 421.0 L1212.0 417.0 L1213.0 424.3 L1214.0 422.8 L1215.0 425.4 L1216.0 421.5 L1217.0 420.3 L1218.0 432.0 L1219.0 426.1 L1220.0 425.4 L1221.0 426.6 L1222.0 428.0 L1223.0 430.2 L1224.0 425.4 L1225.0 428.8 L1226.0 430.6 L1227.0 430.6 L1228.0 426.1 L1229.0 431.3 L1230.0 433.3 L1231.0 433.8 L1232.0 429.2 L1233.0 433.9 L1234.0 432.9 L1235.0 433.2 L1236.0 435.0 L1237.0 435.6 L1238.0 438.1 L1238.8 439.4 L1239.0 438.3 L1240.0 437.7 L1241.0 433.4 L1242.0 433.1 L1243.0 426.9 L1244.0 424.1 L1245.0 426.3 L1246.0 423.5 L1247.0 422.1 L1248.0 417.5 L1249.0 429.4 L1250.0 431.1 L1251.0 429.6 L1252.0 430.9 L1253.0 433.5 L1254.0 433.9 L1255.0 428.5 L1256.0 431.7 L1257.0 431.2 L1258.0 429.6 L1259.0 433.2 L1260.0 432.7 L1261.0 432.1 L1262.0 430.9 L1263.0 430.2 L1264.0 430.3 L1265.0 429.4 L1266.0 430.3 L1267.0 432.6 L1268.0 428.9 L1269.0 433.5 L1270.0 431.2 L1271.0 430.1 L1272.0 434.8 L1273.0 431.8 L1274.0 429.9 L1275.0 425.5 L1276.0 431.6 L1277.0 435.9 L1278.0 427.4 L1279.0 428.8 L1280.0 430.9 L1281.0 431.8 L1282.0 424.5 L1283.0 427.9 L1284.0 427.0 L1285.0 430.0 L1286.0 428.4 L1287.0 429.7 L1288.0 423.3 L1289.0 422.1 L1290.0 428.4 L1291.0 422.9 L1292.0 428.8 L1293.0 427.7 L1294.0 433.2 L1295.0 432.6 L1296.0 433.5 L1297.0 430.5 L1298.0 432.9 L1299.0 431.8 L1300.0 432.5 L1301.0 435.1 L1302.0 435.1 L1303.0 432.3 L1304.0 430.9 L1305.0 430.7 L1306.0 433.4 L1307.0 434.1 L1308.0 425.9 L1309.0 426.5 L1310.0 431.8 L1311.0 431.9 L1312.0 424.7 L1313.0 426.3 L1314.0 425.3 L1315.0 427.9 L1316.0 422.9 L1317.0 424.8 L1318.0 419.9 L1319.0 424.1 L1320.0 425.8 L1321.0 425.7 L1322.0 419.2 L1323.0 423.5 L1324.0 423.3 L1325.0 417.9 L1326.0 422.7 L1327.0 424.8 L1328.0 424.3 L1329.0 415.5 L1330.0 423.0 L1331.0 419.4 L1332.0 422.5 L1333.0 424.4 L1334.0 426.4 L1335.0 421.1 L1336.0 420.2 L1337.0 427.1 L1338.0 428.3 L1339.0 423.6 L1340.0 431.8 L1341.0 432.3 L1342.0 425.3 L1343.0 426.0 L1344.0 425.8 L1345.0 425.8 L1346.0 420.2 L1347.0 423.4 L1348.0 422.4 L1349.0 420.7 L1350.0 423.5 L1351.0 427.3 L1352.0 422.8 L1353.0 424.6 L1354.0 424.7 L1355.0 423.3 L1356.0 421.4 L1357.0 427.8 L1358.0 428.1 L1359.0 430.6 L1360.0 432.3 L1361.0 430.5 L1362.0 423.2 L1363.0 425.3 L1364.0 422.1 L1365.0 422.6 L1366.0 416.3 L1367.0 420.1 L1368.0 420.7 L1369.0 422.1 L1370.0 420.5 L1371.0 424.2 L1372.0 422.2 L1373.0 414.1 L1374.0 427.1 L1375.0 422.5 L1376.0 417.6 L1377.0 417.0 L1378.0 418.8 L1379.0 425.5 L1380.0 419.7 L1381.0 415.6 L1382.0 427.4 L1383.0 425.2 L1384.0 419.5 L1385.0 423.0 L1386.0 422.4 L1387.0 425.6 L1388.0 420.6 L1389.0 414.7 L1390.0 421.7 L1391.0 419.5 L1392.0 424.4 L1393.0 424.3 L1394.0 429.4 L1395.0 424.4 L1396.0 419.2 L1397.0 427.0 L1398.0 431.2 L1399.0 424.8 L1400.0 425.1 L1401.0 425.7 L1402.0 427.2 L1403.0 428.5 L1404.0 429.6 L1405.0 427.0 L1406.0 421.6 L1407.0 434.4 L1408.0 427.6 L1409.0 424.3 L1410.0 424.6 L1411.0 431.6 L1412.0 430.2 L1413.0 433.5 L1414.0 431.5 L1415.0 432.8 L1416.0 426.8 L1417.0 430.7 L1418.0 425.6 L1419.0 425.8 L1420.0 424.0 L1421.0 419.9 L1422.0 413.1 L1423.0 418.3 L1424.0 414.8 L1425.0 421.8 L1426.0 402.3 L1427.0 408.7 L1428.0 412.1 L1429.0 411.1 L1430.0 413.4 L1431.0 422.2 L1432.0 420.6 L1433.0 426.0 L1433.9 435.7 L1434.0 433.4 L1435.0 434.1 L1436.0 427.2 L1437.0 429.4 L1438.0 424.7 L1439.0 420.6 L1440.0 405.0 L1441.0 417.1 L1442.0 414.6 L1443.0 410.6 L1444.0 401.7 L1445.0 412.5 L1446.0 418.7 L1447.0 413.6 L1448.0 418.2 L1449.0 422.5 L1450.0 418.2 L1451.0 421.4 L1452.0 414.8 L1453.0 415.8 L1454.0 419.7 L1455.0 416.2 L1456.0 421.7 L1457.0 418.2 L1458.0 415.0 L1459.0 406.1 L1460.0 405.1 L1461.0 412.2 L1462.0 417.0 L1463.0 412.0 L1464.0 411.7 L1465.0 412.3 L1466.0 407.2 L1467.0 397.5 L1468.0 407.1 L1469.0 420.0 L1470.0 427.7 L1471.0 435.0 L1472.0 424.6 L1473.0 421.0 L1474.0 413.3 L1475.0 422.4 L1476.0 420.3 L1477.0 421.9 L1478.0 422.8 L1479.0 423.0 L1480.0 418.0 L1481.0 429.1 L1482.0 422.0 L1483.0 406.0 L1483.3 397.2 L1484.0 418.6 L1485.0 422.5 L1486.0 424.7 L1487.0 415.9 L1488.0 421.4" fill="none" stroke="#ee5fa5" stroke-width="2.3" stroke-linejoin="round"/>
<line x1="855.500" x2="1489" y1="316.300" y2="316.300" stroke="#e23742" stroke-width="2.800" stroke-dasharray="8.200 3.800"/>
<line x1="851" x2="1489" y1="330.500" y2="330.500" stroke="#cf7f12" stroke-width="2.800" stroke-dasharray="8.200 3.800" stroke-dashoffset="3.500"/>
<rect x="851.500" y="315.600" width="1.500" height="1.500" fill="#e23742"/>
<polygon points="1484.500,301.800 1478.900,312.800 1490.100,312.800" fill="#ffffff"/>
<polygon points="1239.500,445 1234,435 1245,435" fill="#ffffff"/>
</svg>
<div class="t" style="right:1072.0px;top:286.2px;font-size:12.7px;color:#e3eaff;-webkit-text-stroke:0.3px #e3eaff">970</div>
<div class="t" style="right:1072.0px;top:312.5px;font-size:12.7px;color:#e3eaff;-webkit-text-stroke:0.3px #e3eaff">800</div>
<div class="t" style="right:1072.0px;top:343.3px;font-size:12.7px;color:#e3eaff;-webkit-text-stroke:0.3px #e3eaff">600</div>
<div class="t" style="right:1072.0px;top:374.2px;font-size:12.7px;color:#e3eaff;-webkit-text-stroke:0.3px #e3eaff">400</div>
<div class="t" style="right:1072.0px;top:405.1px;font-size:12.7px;color:#e3eaff;-webkit-text-stroke:0.3px #e3eaff">200</div>
<div class="t" style="right:1072.0px;top:435.9px;font-size:12.7px;color:#e3eaff;-webkit-text-stroke:0.3px #e3eaff">0</div>
<div class="t" style="left:770.5px;width:200px;text-align:center;top:451.1px;font-size:12.7px;color:#e3eaff;-webkit-text-stroke:0.3px #e3eaff">25.01.</div>
<div class="t" style="left:856.9px;width:200px;text-align:center;top:451.1px;font-size:12.7px;color:#e3eaff;-webkit-text-stroke:0.3px #e3eaff">06:00</div>
<div class="t" style="left:943.3px;width:200px;text-align:center;top:451.1px;font-size:12.7px;color:#e3eaff;-webkit-text-stroke:0.3px #e3eaff">12:00</div>
<div class="t" style="left:1029.7px;width:200px;text-align:center;top:451.1px;font-size:12.7px;color:#e3eaff;-webkit-text-stroke:0.3px #e3eaff">18:00</div>
<div class="t" style="left:1116.1px;width:200px;text-align:center;top:451.1px;font-size:12.7px;color:#e3eaff;-webkit-text-stroke:0.3px #e3eaff">26.01.</div>
<div class="t" style="left:1202.5px;width:200px;text-align:center;top:451.1px;font-size:12.7px;color:#e3eaff;-webkit-text-stroke:0.3px #e3eaff">06:00</div>
<div class="t" style="left:1288.9px;width:200px;text-align:center;top:451.1px;font-size:12.7px;color:#e3eaff;-webkit-text-stroke:0.3px #e3eaff">12:00</div>
<div class="t" style="left:1375.3px;width:200px;text-align:center;top:451.1px;font-size:12.7px;color:#e3eaff;-webkit-text-stroke:0.3px #e3eaff">18:00</div>
<div class="abs" style="left:917.4px;top:483.5px;width:14.400px;height:14.400px;border-radius:50%;background:#7285cf"></div>
<div class="abs" style="left:965.6px;top:483.5px;width:14.400px;height:14.400px;border-radius:50%;background:#d8f0f2"></div>
<div class="abs" style="left:1013.0px;top:483.5px;width:14.400px;height:14.400px;border-radius:50%;background:#9356b0"></div>
<div class="abs" style="left:1060.7px;top:483.5px;width:14.400px;height:14.400px;border-radius:50%;background:#ee5fa5"></div>
<div class="abs" style="left:1108.8px;top:483.5px;width:14.400px;height:14.400px;border-radius:50%;background:#cf7f12"></div>
<div class="abs" style="left:1247.7px;top:483.5px;width:14.400px;height:14.400px;border-radius:50%;background:#f02a2a"></div>
<div class="t b" style="left:942.4px;top:483.9px;font-size:12px;color:#dfe7ff;">L1</div>
<div class="t b" style="left:989.8px;top:483.9px;font-size:12px;color:#dfe7ff;">L2</div>
<div class="t b" style="left:1038.0px;top:483.9px;font-size:12px;color:#dfe7ff;">L3</div>
<div class="t b" style="left:1085.6px;top:483.9px;font-size:12px;color:#dfe7ff;">Ln</div>
<div class="t b" style="left:1134.3px;top:483.9px;font-size:12px;color:#dfe7ff;">Warnung Überlast</div>
<div class="t b" style="left:1272.8px;top:484.2px;font-size:11.7px;color:#dfe7ff;">Kritisch Überlast</div>
<!-- EVENTS PANEL -->
<div class="abs" style="left:770.500px;top:523px;width:743.500px;height:357px;background:#0b1a3e;border-radius:10px 0 0 10px"></div>
<div class="abs" style="left:1508.500px;top:525px;width:5px;height:355px;background:#0e2149"></div>
<div class="abs" style="left:787.500px;top:553px;width:16.500px;height:2.200px;background:#eef2ff"></div>
<div class="abs" style="left:790.500px;top:557.800px;width:10.500px;height:2.200px;background:#eef2ff"></div>
<div class="abs" style="left:793.500px;top:562.500px;width:4.500px;height:2.200px;background:#eef2ff"></div>
<div class="t b" style="left:856.8px;top:547.9px;font-size:14.2px;color:#dfe7ff;letter-spacing:0.05px">Alle</div>
<div class="t b" style="left:977.5px;top:547.9px;font-size:14.2px;color:#dfe7ff;letter-spacing:0.05px">Schwellwerte</div>
<div class="t b" style="left:1164.0px;top:547.9px;font-size:14.2px;color:#dfe7ff;letter-spacing:0.05px">Lastlimitierung</div>
<div class="t b" style="left:1359.3px;top:547.9px;font-size:14.2px;color:#dfe7ff;letter-spacing:0.05px">Techn. Fehler</div>
<div class="abs" style="left:808.500px;top:577px;width:691px;height:1px;background:#26406e"></div>
<div class="abs" style="left:827px;top:574.300px;width:85.500px;height:3px;background:#8fd4ec;border-radius:1px"></div>
<div class="t b" style="left:824.9px;top:597.5px;font-size:12.4px;color:#dfe7ff;">Objekt</div>
<div class="t b" style="left:962.8px;top:597.5px;font-size:12.4px;color:#dfe7ff;">Zeitpunkt</div>
<div class="t b" style="left:1101.0px;top:597.5px;font-size:12.4px;color:#dfe7ff;">Schwere</div>
<div class="t b" style="left:1191.8px;top:597.5px;font-size:12.4px;color:#dfe7ff;">Grund</div>
<div class="t b" style="left:1316.2px;top:597.5px;font-size:12.4px;color:#dfe7ff;">Wert</div>
<div class="abs" style="left:810px;top:629.0px;width:689px;height:0;border-top:1px dashed #11224e"></div>
<svg style="left:817px;top:651.0px" width="18" height="18" viewBox="0 0 24 24"><g fill="none" stroke="#7fd447" stroke-width="2.400" stroke-linecap="round"><path d="M7.500 5.500H15a3.250 3.250 0 0 1 0 6.500H9a3.250 3.250 0 0 0 0 6.500h7.500"/></g><circle cx="5" cy="5.500" r="2.300" fill="none" stroke="#7fd447" stroke-width="2.200"/><circle cx="19" cy="18.500" r="2.300" fill="none" stroke="#7fd447" stroke-width="2.200"/></svg>
<div class="t" style="left:841.0px;top:652.2px;font-size:14.8px;color:#eaf0ff;-webkit-text-stroke:0.3px #eaf0ff">Kabela...</div>
<svg style="left:955.3px;top:655.5px" width="11.300" height="11.300" viewBox="0 0 11 11"><circle cx="5.500" cy="5.500" r="5.500" fill="#b3bee6"/><path d="M5.500 2.600V5.700L7.500 6.900" fill="none" stroke="#5c6a9a" stroke-width="1.100"/></svg>
<div class="t" style="left:976.0px;top:655.9px;font-size:10.5px;color:#a9b5db;">26.01.2025, 18:09:18</div>
<div class="abs" style="left:1093px;top:649.0px;width:60.600px;height:22.500px;border-radius:12px;border:1px solid #df4a55;box-shadow:0 0 0 0.6px rgba(223,74,85,0.75);background:#2a1f3e"></div>
<div class="t b" style="left:1105.0px;top:655.5px;font-size:10px;color:#f24848;">Kritisch</div>
<div class="t" style="left:1183.9px;top:654.2px;font-size:12.9px;color:#e6ecff;-webkit-text-stroke:0.3px #e6ecff">Überlast (L1)</div>
<div class="t b" style="left:1308.3px;top:635.8px;font-size:10.3px;color:#dfe7ff;">180,61</div>
<div class="t b" style="left:1308.3px;top:655.8px;font-size:10.3px;color:#dfe7ff;">180,00</div>
<div class="t b" style="left:1308.3px;top:675.8px;font-size:10.3px;color:#dfe7ff;">200,00</div>
<div class="abs" style="left:810px;top:690.0px;width:689px;height:0;border-top:1px dashed #11224e"></div>
<svg style="left:817px;top:712.0px" width="18" height="18" viewBox="0 0 24 24"><g fill="none" stroke="#7fd447" stroke-width="2.400" stroke-linecap="round"><path d="M7.500 5.500H15a3.250 3.250 0 0 1 0 6.500H9a3.250 3.250 0 0 0 0 6.500h7.500"/></g><circle cx="5" cy="5.500" r="2.300" fill="none" stroke="#7fd447" stroke-width="2.200"/><circle cx="19" cy="18.500" r="2.300" fill="none" stroke="#7fd447" stroke-width="2.200"/></svg>
<div class="t" style="left:841.0px;top:713.2px;font-size:14.8px;color:#eaf0ff;-webkit-text-stroke:0.3px #eaf0ff">Kabela...</div>
<svg style="left:955.3px;top:716.5px" width="11.300" height="11.300" viewBox="0 0 11 11"><circle cx="5.500" cy="5.500" r="5.500" fill="#b3bee6"/><path d="M5.500 2.600V5.700L7.500 6.900" fill="none" stroke="#5c6a9a" stroke-width="1.100"/></svg>
<div class="t" style="left:976.0px;top:716.9px;font-size:10.5px;color:#a9b5db;">26.01.2025, 18:09:19</div>
<div class="abs" style="left:1093px;top:710.0px;width:60.600px;height:22.500px;border-radius:12px;border:1px solid #df4a55;box-shadow:0 0 0 0.6px rgba(223,74,85,0.75);background:#2a1f3e"></div>
<div class="t b" style="left:1105.0px;top:716.5px;font-size:10px;color:#f24848;">Kritisch</div>
<div class="t" style="left:1183.9px;top:715.2px;font-size:12.9px;color:#e6ecff;-webkit-text-stroke:0.3px #e6ecff">Überlast (L1)</div>
<div class="t b" style="left:1308.3px;top:696.8px;font-size:10.3px;color:#dfe7ff;">183,98</div>
<div class="t b" style="left:1308.3px;top:716.8px;font-size:10.3px;color:#dfe7ff;">180,00</div>
<div class="t b" style="left:1308.3px;top:736.8px;font-size:10.3px;color:#dfe7ff;">200,00</div>
<div class="abs" style="left:810px;top:751.0px;width:689px;height:0;border-top:1px dashed #11224e"></div>
<svg style="left:817px;top:773.0px" width="18" height="18" viewBox="0 0 24 24"><g fill="none" stroke="#7fd447" stroke-width="2.400" stroke-linecap="round"><path d="M7.500 5.500H15a3.250 3.250 0 0 1 0 6.500H9a3.250 3.250 0 0 0 0 6.500h7.500"/></g><circle cx="5" cy="5.500" r="2.300" fill="none" stroke="#7fd447" stroke-width="2.200"/><circle cx="19" cy="18.500" r="2.300" fill="none" stroke="#7fd447" stroke-width="2.200"/></svg>
<div class="t" style="left:841.0px;top:774.2px;font-size:14.8px;color:#eaf0ff;-webkit-text-stroke:0.3px #eaf0ff">Kabela...</div>
<svg style="left:955.3px;top:777.5px" width="11.300" height="11.300" viewBox="0 0 11 11"><circle cx="5.500" cy="5.500" r="5.500" fill="#b3bee6"/><path d="M5.500 2.600V5.700L7.500 6.900" fill="none" stroke="#5c6a9a" stroke-width="1.100"/></svg>
<div class="t" style="left:976.0px;top:777.9px;font-size:10.5px;color:#a9b5db;">26.01.2025, 18:09:18</div>
<div class="abs" style="left:1093px;top:771.0px;width:67.700px;height:22.500px;border-radius:12px;border:1px solid #eda55a;box-shadow:0 0 0 0.6px rgba(237,165,90,0.75);background:#3a2d33"></div>
<div class="t b" style="left:1105.0px;top:777.5px;font-size:10px;color:#f7b563;letter-spacing:0.12px">Warnung</div>
<div class="t" style="left:1183.9px;top:776.2px;font-size:12.9px;color:#e6ecff;-webkit-text-stroke:0.3px #e6ecff">Überlast (L1)</div>
<div class="t b" style="left:1308.3px;top:757.8px;font-size:10.3px;color:#dfe7ff;">175,65</div>
<div class="t b" style="left:1308.3px;top:777.8px;font-size:10.3px;color:#dfe7ff;">160,00</div>
<div class="t b" style="left:1308.3px;top:797.8px;font-size:10.3px;color:#dfe7ff;">200,00</div>
<div class="t" style="left:1242.5px;top:832.0px;font-size:12.5px;color:#e3eaff;letter-spacing:0.5px">1 - 3 von 32</div>
<svg style="left:1356.3px;top:828.8px" width="18" height="18" viewBox="0 0 24 24"><path fill="none" stroke="#eef2ff" stroke-width="2.600" d="M5.500 4V20M17.500 5 10.500 12l7 7"/></svg>
<svg style="left:1391.5px;top:828.8px" width="18" height="18" viewBox="0 0 24 24"><path fill="none" stroke="#eef2ff" stroke-width="2.600" d="M15.500 5 8.500 12l7 7"/></svg>
<svg style="left:1427.8px;top:828.8px" width="18" height="18" viewBox="0 0 24 24"><path fill="none" stroke="#eef2ff" stroke-width="2.600" d="M8.500 5 15.500 12l-7 7"/></svg>
<svg style="left:1463.8px;top:828.8px" width="18" height="18" viewBox="0 0 24 24"><path fill="none" stroke="#eef2ff" stroke-width="2.600" d="M18.500 4V20M6.500 5 13.500 12l-7 7"/></svg>
<!-- TRAFO DETAILS PANEL -->
<div class="panel" style="left:1524.500px;top:114px;width:371px;height:416px"></div>
<div class="t b" style="left:1544.0px;top:128.3px;font-size:20px;color:#e6ecff;letter-spacing:-0.85px">Trafo 1</div>
<svg style="left:1861.500px;top:124.300px" width="21" height="21" viewBox="0 0 24 24"><path fill="#e6ecff" d="M3 17.250V21h3.750L17.810 9.940l-3.750-3.750L3 17.250zM20.710 7.040a.996.996 0 0 0 0-1.410l-2.340-2.340a.996.996 0 0 0-1.410 0l-1.830 1.830 3.750 3.750 1.830-1.830z"/></svg>
<div class="t" style="left:1544.0px;top:155.5px;font-size:12.5px;color:#e3eaff;">ID</div>
<div class="t" style="right:36.0px;top:155.5px;font-size:12.5px;color:#e3eaff;">Trafo 1</div>
<div class="t" style="left:1544.0px;top:178.5px;font-size:12.5px;color:#e3eaff;">Laufende Nummer</div>
<div class="t" style="right:36.0px;top:178.5px;font-size:12.5px;color:#e3eaff;">1</div>
<div class="t" style="left:1544.0px;top:201.5px;font-size:12.5px;color:#e3eaff;">Nennscheinleistung</div>
<div class="t" style="right:36.0px;top:201.5px;font-size:12.5px;color:#e3eaff;">630 kVA</div>
<div class="t" style="left:1544.0px;top:224.5px;font-size:12.5px;color:#e3eaff;">Nennspannung</div>
<div class="t" style="right:36.0px;top:224.5px;font-size:12.5px;color:#e3eaff;">--</div>
<div class="t" style="left:1544.0px;top:247.5px;font-size:12.5px;color:#e3eaff;">Maximale Nennscheinleistung</div>
<div class="t" style="right:36.0px;top:247.5px;font-size:12.5px;color:#e3eaff;">--</div>
<div class="t" style="left:1544.0px;top:270.5px;font-size:12.5px;color:#e3eaff;">Nennscheinleistungsfaktor</div>
<div class="t" style="right:36.0px;top:270.5px;font-size:12.5px;color:#e3eaff;">0.8</div>
<div class="t" style="left:1544.0px;top:293.5px;font-size:12.5px;color:#e3eaff;">Sicherung</div>
<div class="t" style="right:36.0px;top:293.5px;font-size:12.5px;color:#e3eaff;">910 A</div>
<div class="t" style="left:1544.0px;top:316.5px;font-size:12.5px;color:#e3eaff;">Grenzwert Überspannung Warnung</div>
<div class="t" style="right:36.0px;top:316.5px;font-size:12.5px;color:#e3eaff;">105 %</div>
<div class="t" style="left:1544.0px;top:339.5px;font-size:12.5px;color:#e3eaff;">Grenzwert Überspannung Kritisch</div>
<div class="t" style="right:36.0px;top:339.5px;font-size:12.5px;color:#e3eaff;">108 %</div>
<div class="t" style="left:1544.0px;top:362.5px;font-size:12.5px;color:#e3eaff;">Steuerungszielwert Überspannung</div>
<div class="t" style="right:36.0px;top:362.5px;font-size:12.5px;color:#e3eaff;">107 %</div>
<div class="t" style="left:1544.0px;top:385.5px;font-size:12.5px;color:#e3eaff;">Grenzwert Unterspannung Warnung</div>
<div class="t" style="right:36.0px;top:385.5px;font-size:12.5px;color:#e3eaff;">95 %</div>
<div class="t" style="left:1544.0px;top:408.5px;font-size:12.5px;color:#e3eaff;">Grenzwert Unterspannung Kritisch</div>
<div class="t" style="right:36.0px;top:408.5px;font-size:12.5px;color:#e3eaff;">92 %</div>
<div class="t" style="left:1544.0px;top:431.5px;font-size:12.5px;color:#e3eaff;">Steuerungszielwert Unterspannung</div>
<div class="t" style="right:36.0px;top:431.5px;font-size:12.5px;color:#e3eaff;">94 %</div>
<div class="t" style="left:1544.0px;top:454.5px;font-size:12.5px;color:#e3eaff;">Grenzwert Überlast Warnung</div>
<div class="t" style="right:36.0px;top:454.5px;font-size:12.5px;color:#e3eaff;">80 %</div>
<div class="t" style="left:1544.0px;top:477.5px;font-size:12.5px;color:#e3eaff;">Grenzwert Überlast Kritisch</div>
<div class="t" style="right:36.0px;top:477.5px;font-size:12.5px;color:#e3eaff;">90 %</div>
<div class="t" style="left:1544.0px;top:500.5px;font-size:12.5px;color:#e3eaff;">Steuerungszielwert Überlast</div>
<div class="t" style="right:36.0px;top:500.5px;font-size:12.5px;color:#e3eaff;">85 %</div>
<div class="t" style="left:1769.5px;top:905.5px;font-size:10px;color:#dfe6f7">Version: 0.0.1  KRITIS_DEV</div>
</div>
</body>
</html>
